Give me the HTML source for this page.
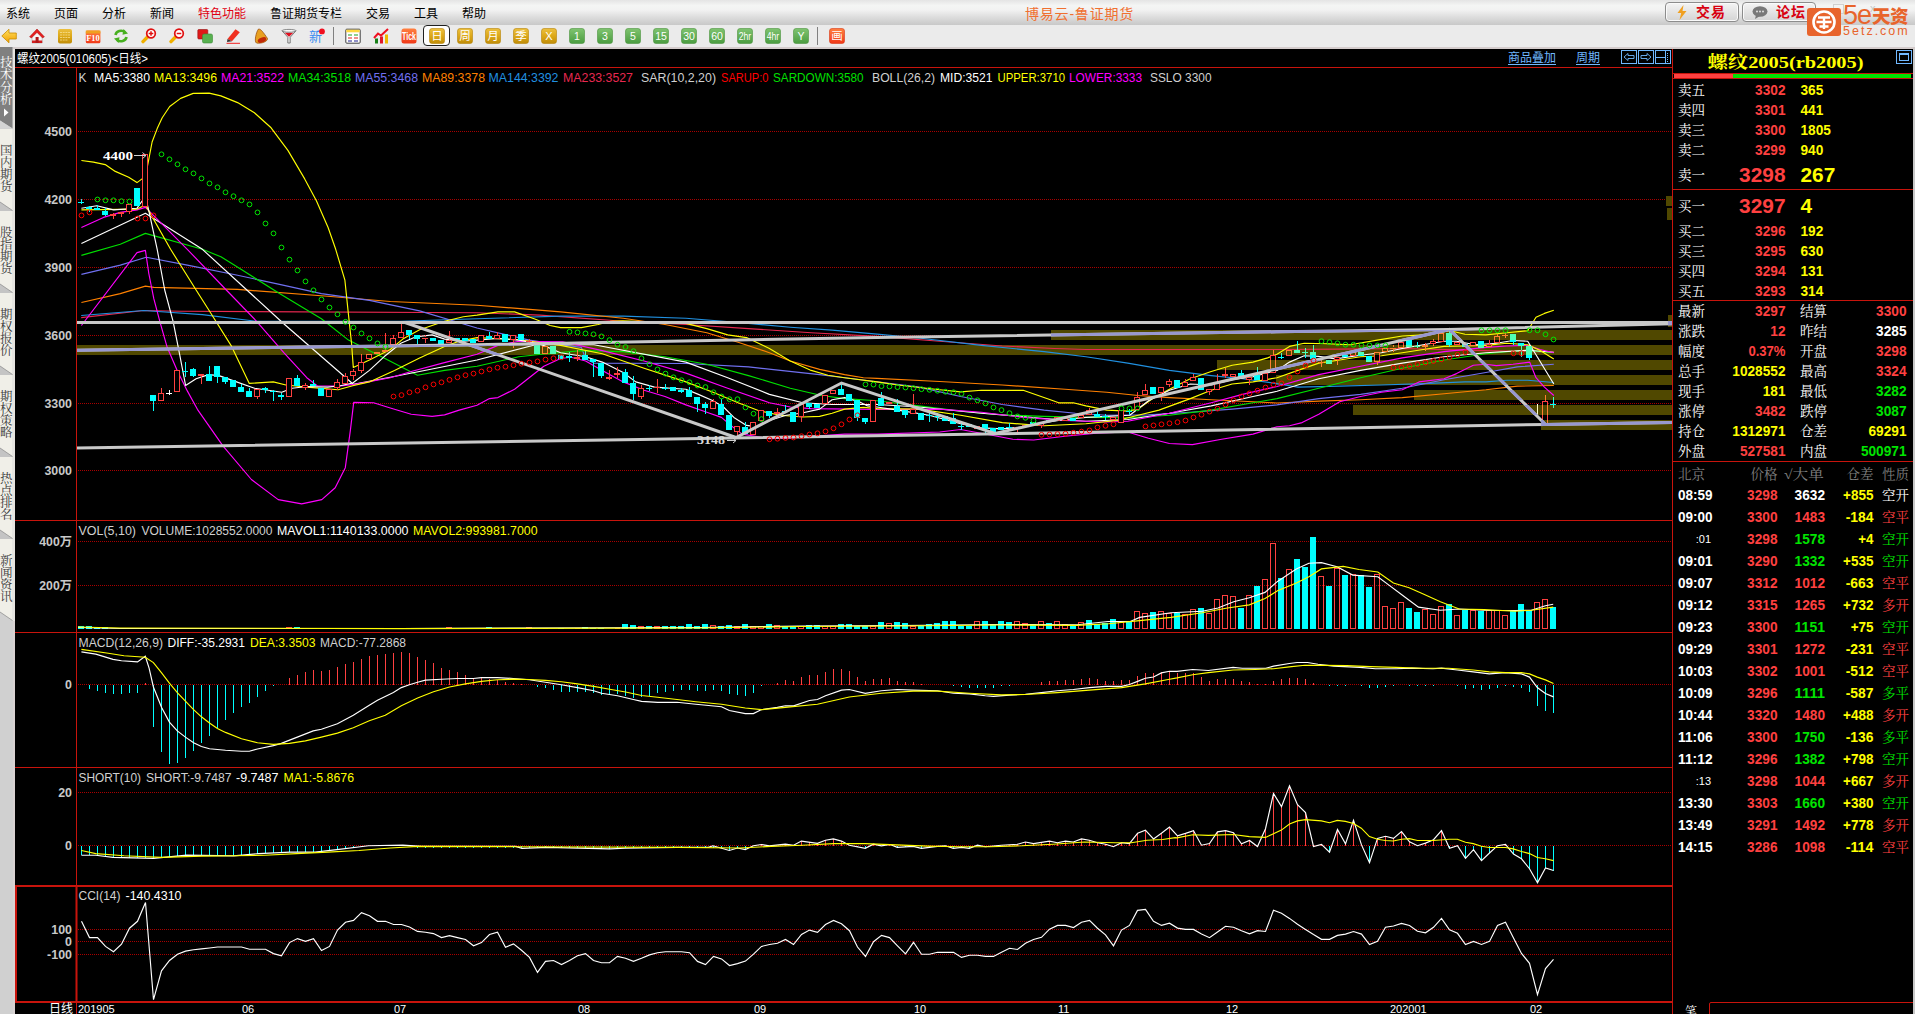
<!DOCTYPE html>
<html lang="zh-CN"><head><meta charset="utf-8"><title>博易云-鲁证期货</title>
<style>
html,body{margin:0;padding:0}
body{width:1915px;height:1014px;overflow:hidden;background:#ebebeb;position:relative;font-family:"Liberation Sans","Noto Sans CJK SC",sans-serif}
#menubar{position:absolute;left:0;top:0;width:1915px;height:25px;background:linear-gradient(#e4e4e4 0,#f4f5f4 22%,#f2f2f2 40%,#dcdcdc 70%,#c8c8c8 100%)}
#toolbar{position:absolute;left:0;top:25px;width:1915px;height:22px;background:#ebebeb}
#tbline{position:absolute;left:13px;top:47px;width:1902px;height:2px;background:#d4cccc}
.mi{position:absolute;top:6.5px;font-size:12px;line-height:15px;white-space:nowrap;letter-spacing:0}
.ttl{position:absolute;left:1025px;top:5.5px;font-size:14px;line-height:16px;color:#f07030;white-space:nowrap;letter-spacing:.8px}
.tb{position:absolute;top:2px;width:72px;height:18px;border:1px solid #8c8c8c;border-radius:4px;background:linear-gradient(#f4f4f4,#d4d4d4);box-shadow:inset 0 0 0 1px #fafafa}
.tb b{position:absolute;top:1px;font-size:14px;line-height:16px;color:#d80010;font-weight:bold;letter-spacing:1px}
.ic{position:absolute;display:block}
.sep{position:absolute;top:27px;width:1px;height:18px;background:#808080}
.wm{position:absolute;left:1807px;top:8px;width:104px;height:29px}
.w1{position:absolute;left:36px;top:-7px;font-size:27px;line-height:28px;color:#e8642c;letter-spacing:-1px}
.w2{position:absolute;left:65px;top:-1px;font-size:18.5px;line-height:20px;color:#e8642c;font-weight:900;white-space:nowrap;letter-spacing:-.5px}
.w3{position:absolute;left:36px;top:17px;font-size:12.5px;line-height:12px;color:#e8642c;letter-spacing:2px}
#main{position:absolute;left:0;top:0}
</style></head>
<body>
<svg id="main" width="1915" height="1014" viewBox="0 0 1915 1014" font-family='"Liberation Sans","Noto Sans CJK SC",sans-serif'>
<rect x="0" y="47" width="13" height="967" fill="#d0d0d0"/>
<rect x="13" y="48" width="2" height="966" fill="#d8d2d2"/>
<rect x="12.5" y="48" width="2.5" height="573" fill="#e6e4e0"/>
<path d="M0 47 H12.5 V128.5 L0 120.5 Z" fill="#808080"/>
<path d="M0 120.5 L12.5 128.5 H0 Z" fill="#d4d4d4"/>
<text x="6.3" y="67.0" fill="#fff" font-size="12.5" text-anchor="middle" font-family='"Liberation Serif","Noto Serif CJK SC",serif'>技</text><text x="6.3" y="79.3" fill="#fff" font-size="12.5" text-anchor="middle" font-family='"Liberation Serif","Noto Serif CJK SC",serif'>术</text><text x="6.3" y="91.6" fill="#fff" font-size="12.5" text-anchor="middle" font-family='"Liberation Serif","Noto Serif CJK SC",serif'>分</text><text x="6.3" y="103.9" fill="#fff" font-size="12.5" text-anchor="middle" font-family='"Liberation Serif","Noto Serif CJK SC",serif'>析</text>
<path d="M4 108.5 L8.5 112.5 L4 116.5 Z" fill="#fff"/>
<rect x="0" y="129" width="12.5" height="82" fill="#f0efe8"/>
<path d="M0 202 L12.5 210.5 V211 H0 Z" fill="#c4c4c4"/>
<path d="M0 202 L12.5 210.5" stroke="#909090" stroke-width=".8" fill="none"/>
<text x="6.3" y="154.5" fill="#383838" font-size="12.5" text-anchor="middle" font-family='"Liberation Serif","Noto Serif CJK SC",serif'>国</text><text x="6.3" y="166.8" fill="#383838" font-size="12.5" text-anchor="middle" font-family='"Liberation Serif","Noto Serif CJK SC",serif'>内</text><text x="6.3" y="179.1" fill="#383838" font-size="12.5" text-anchor="middle" font-family='"Liberation Serif","Noto Serif CJK SC",serif'>期</text><text x="6.3" y="191.4" fill="#383838" font-size="12.5" text-anchor="middle" font-family='"Liberation Serif","Noto Serif CJK SC",serif'>货</text>
<rect x="0" y="211" width="12.5" height="82" fill="#f0efe8"/>
<path d="M0 284 L12.5 292.5 V293 H0 Z" fill="#c4c4c4"/>
<path d="M0 284 L12.5 292.5" stroke="#909090" stroke-width=".8" fill="none"/>
<text x="6.3" y="236.5" fill="#383838" font-size="12.5" text-anchor="middle" font-family='"Liberation Serif","Noto Serif CJK SC",serif'>股</text><text x="6.3" y="248.8" fill="#383838" font-size="12.5" text-anchor="middle" font-family='"Liberation Serif","Noto Serif CJK SC",serif'>指</text><text x="6.3" y="261.1" fill="#383838" font-size="12.5" text-anchor="middle" font-family='"Liberation Serif","Noto Serif CJK SC",serif'>期</text><text x="6.3" y="273.4" fill="#383838" font-size="12.5" text-anchor="middle" font-family='"Liberation Serif","Noto Serif CJK SC",serif'>货</text>
<rect x="0" y="293" width="12.5" height="82" fill="#f0efe8"/>
<path d="M0 366 L12.5 374.5 V375 H0 Z" fill="#c4c4c4"/>
<path d="M0 366 L12.5 374.5" stroke="#909090" stroke-width=".8" fill="none"/>
<text x="6.3" y="318.5" fill="#383838" font-size="12.5" text-anchor="middle" font-family='"Liberation Serif","Noto Serif CJK SC",serif'>期</text><text x="6.3" y="330.8" fill="#383838" font-size="12.5" text-anchor="middle" font-family='"Liberation Serif","Noto Serif CJK SC",serif'>权</text><text x="6.3" y="343.1" fill="#383838" font-size="12.5" text-anchor="middle" font-family='"Liberation Serif","Noto Serif CJK SC",serif'>报</text><text x="6.3" y="355.4" fill="#383838" font-size="12.5" text-anchor="middle" font-family='"Liberation Serif","Noto Serif CJK SC",serif'>价</text>
<rect x="0" y="375" width="12.5" height="82" fill="#f0efe8"/>
<path d="M0 448 L12.5 456.5 V457 H0 Z" fill="#c4c4c4"/>
<path d="M0 448 L12.5 456.5" stroke="#909090" stroke-width=".8" fill="none"/>
<text x="6.3" y="400.5" fill="#383838" font-size="12.5" text-anchor="middle" font-family='"Liberation Serif","Noto Serif CJK SC",serif'>期</text><text x="6.3" y="412.8" fill="#383838" font-size="12.5" text-anchor="middle" font-family='"Liberation Serif","Noto Serif CJK SC",serif'>权</text><text x="6.3" y="425.1" fill="#383838" font-size="12.5" text-anchor="middle" font-family='"Liberation Serif","Noto Serif CJK SC",serif'>策</text><text x="6.3" y="437.4" fill="#383838" font-size="12.5" text-anchor="middle" font-family='"Liberation Serif","Noto Serif CJK SC",serif'>略</text>
<rect x="0" y="457" width="12.5" height="82" fill="#f0efe8"/>
<path d="M0 530 L12.5 538.5 V539 H0 Z" fill="#c4c4c4"/>
<path d="M0 530 L12.5 538.5" stroke="#909090" stroke-width=".8" fill="none"/>
<text x="6.3" y="482.5" fill="#383838" font-size="12.5" text-anchor="middle" font-family='"Liberation Serif","Noto Serif CJK SC",serif'>热</text><text x="6.3" y="494.8" fill="#383838" font-size="12.5" text-anchor="middle" font-family='"Liberation Serif","Noto Serif CJK SC",serif'>点</text><text x="6.3" y="507.1" fill="#383838" font-size="12.5" text-anchor="middle" font-family='"Liberation Serif","Noto Serif CJK SC",serif'>排</text><text x="6.3" y="519.4" fill="#383838" font-size="12.5" text-anchor="middle" font-family='"Liberation Serif","Noto Serif CJK SC",serif'>名</text>
<rect x="0" y="539" width="12.5" height="82" fill="#f0efe8"/>
<path d="M0 612 L12.5 620.5 V621.5 H0 Z" fill="#d0d0d0"/>
<path d="M0 612 L12.5 620.5" stroke="#909090" stroke-width=".8" fill="none"/>
<text x="6.3" y="564.5" fill="#383838" font-size="12.5" text-anchor="middle" font-family='"Liberation Serif","Noto Serif CJK SC",serif'>新</text><text x="6.3" y="576.8" fill="#383838" font-size="12.5" text-anchor="middle" font-family='"Liberation Serif","Noto Serif CJK SC",serif'>闻</text><text x="6.3" y="589.1" fill="#383838" font-size="12.5" text-anchor="middle" font-family='"Liberation Serif","Noto Serif CJK SC",serif'>资</text><text x="6.3" y="601.4" fill="#383838" font-size="12.5" text-anchor="middle" font-family='"Liberation Serif","Noto Serif CJK SC",serif'>讯</text>
<rect x="15" y="49" width="1898" height="965" fill="#000"/>
<text x="17" y="62.5" fill="#fff" font-size="12" textLength="131" lengthAdjust="spacingAndGlyphs">螺纹2005(010605)&lt;日线&gt;</text>
<line x1="15" y1="67.5" x2="1672.5" y2="67.5" stroke="#c8140c" stroke-width="1"/>
<line x1="76.5" y1="68" x2="76.5" y2="1014" stroke="#c8140c" stroke-width="1"/>
<line x1="1672.5" y1="49" x2="1672.5" y2="1014" stroke="#c8140c" stroke-width="1"/>
<line x1="15" y1="520.5" x2="1672.5" y2="520.5" stroke="#c8140c" stroke-width="1"/>
<line x1="15" y1="632.5" x2="1672.5" y2="632.5" stroke="#c8140c" stroke-width="1"/>
<line x1="15" y1="767.5" x2="1672.5" y2="767.5" stroke="#c8140c" stroke-width="1"/>
<rect x="16" y="886" width="60.5" height="116" fill="none" stroke="#c8140c" stroke-width="2"/>
<line x1="76" y1="886" x2="1672.5" y2="886" stroke="#c8140c" stroke-width="2"/>
<line x1="76" y1="1002" x2="1672.5" y2="1002" stroke="#c8140c" stroke-width="2"/>
<line x1="78" y1="131.5" x2="1672" y2="131.5" stroke="#a80000" stroke-width="1" stroke-dasharray="1,1"/>
<text x="72" y="136.0" fill="#c8c8c8" font-size="12" text-anchor="end" font-weight="bold" textLength="27.6" lengthAdjust="spacingAndGlyphs">4500</text>
<line x1="78" y1="199.5" x2="1672" y2="199.5" stroke="#a80000" stroke-width="1" stroke-dasharray="1,1"/>
<text x="72" y="204.0" fill="#c8c8c8" font-size="12" text-anchor="end" font-weight="bold" textLength="27.6" lengthAdjust="spacingAndGlyphs">4200</text>
<line x1="78" y1="267.5" x2="1672" y2="267.5" stroke="#a80000" stroke-width="1" stroke-dasharray="1,1"/>
<text x="72" y="272.0" fill="#c8c8c8" font-size="12" text-anchor="end" font-weight="bold" textLength="27.6" lengthAdjust="spacingAndGlyphs">3900</text>
<line x1="78" y1="335.5" x2="1672" y2="335.5" stroke="#a80000" stroke-width="1" stroke-dasharray="1,1"/>
<text x="72" y="340.0" fill="#c8c8c8" font-size="12" text-anchor="end" font-weight="bold" textLength="27.6" lengthAdjust="spacingAndGlyphs">3600</text>
<line x1="78" y1="403.5" x2="1672" y2="403.5" stroke="#a80000" stroke-width="1" stroke-dasharray="1,1"/>
<text x="72" y="408.0" fill="#c8c8c8" font-size="12" text-anchor="end" font-weight="bold" textLength="27.6" lengthAdjust="spacingAndGlyphs">3300</text>
<line x1="78" y1="470.5" x2="1672" y2="470.5" stroke="#a80000" stroke-width="1" stroke-dasharray="1,1"/>
<text x="72" y="475.0" fill="#c8c8c8" font-size="12" text-anchor="end" font-weight="bold" textLength="27.6" lengthAdjust="spacingAndGlyphs">3000</text>
<line x1="78" y1="541.5" x2="1672" y2="541.5" stroke="#a80000" stroke-width="1" stroke-dasharray="1,1"/>
<text x="72" y="546.0" fill="#c8c8c8" font-size="12" text-anchor="end" font-weight="bold" textLength="32.7" lengthAdjust="spacingAndGlyphs">400万</text>
<line x1="78" y1="585.5" x2="1672" y2="585.5" stroke="#a80000" stroke-width="1" stroke-dasharray="1,1"/>
<text x="72" y="590.0" fill="#c8c8c8" font-size="12" text-anchor="end" font-weight="bold" textLength="32.7" lengthAdjust="spacingAndGlyphs">200万</text>
<line x1="78" y1="684.5" x2="1672" y2="684.5" stroke="#a80000" stroke-width="1" stroke-dasharray="1,1"/>
<text x="72" y="689" fill="#c8c8c8" font-size="12" text-anchor="end" font-weight="bold" textLength="6.9" lengthAdjust="spacingAndGlyphs">0</text>
<line x1="78" y1="792.5" x2="1672" y2="792.5" stroke="#a80000" stroke-width="1" stroke-dasharray="1,1"/>
<text x="72" y="797" fill="#c8c8c8" font-size="12" text-anchor="end" font-weight="bold" textLength="13.8" lengthAdjust="spacingAndGlyphs">20</text>
<line x1="78" y1="845.5" x2="1672" y2="845.5" stroke="#a80000" stroke-width="1" stroke-dasharray="1,1"/>
<text x="72" y="850" fill="#c8c8c8" font-size="12" text-anchor="end" font-weight="bold" textLength="6.9" lengthAdjust="spacingAndGlyphs">0</text>
<line x1="78" y1="929.5" x2="1672" y2="929.5" stroke="#a80000" stroke-width="1" stroke-dasharray="1,1"/>
<text x="72" y="934.0" fill="#c8c8c8" font-size="12" text-anchor="end" font-weight="bold" textLength="20.7" lengthAdjust="spacingAndGlyphs">100</text>
<line x1="78" y1="941.5" x2="1672" y2="941.5" stroke="#a80000" stroke-width="1" stroke-dasharray="1,1"/>
<text x="72" y="946.0" fill="#c8c8c8" font-size="12" text-anchor="end" font-weight="bold" textLength="6.9" lengthAdjust="spacingAndGlyphs">0</text>
<line x1="78" y1="954.5" x2="1672" y2="954.5" stroke="#a80000" stroke-width="1" stroke-dasharray="1,1"/>
<text x="72" y="959.0" fill="#c8c8c8" font-size="12" text-anchor="end" font-weight="bold" textLength="24.9" lengthAdjust="spacingAndGlyphs">-100</text>
<text x="73" y="1013" fill="#fff" font-size="12" text-anchor="end">日线</text>
<text x="78" y="1013" fill="#fff" font-size="11">201905</text>
<text x="242" y="1013" fill="#fff" font-size="11">06</text>
<text x="394" y="1013" fill="#fff" font-size="11">07</text>
<text x="578" y="1013" fill="#fff" font-size="11">08</text>
<text x="754" y="1013" fill="#fff" font-size="11">09</text>
<text x="914" y="1013" fill="#fff" font-size="11">10</text>
<text x="1058" y="1013" fill="#fff" font-size="11">11</text>
<text x="1226" y="1013" fill="#fff" font-size="11">12</text>
<text x="1390" y="1013" fill="#fff" font-size="11">202001</text>
<text x="1530" y="1013" fill="#fff" font-size="11">02</text>
<svg x="77" y="68" width="1595" height="946" viewBox="77 68 1595 946" overflow="hidden">
<defs><clipPath id="bandclip"><rect x="1051" y="330" width="621" height="10"/><rect x="77" y="345" width="1595" height="10"/><rect x="1217" y="360" width="455" height="10"/><rect x="1276" y="375" width="396" height="10"/><rect x="1414" y="390" width="258" height="10"/><rect x="1353" y="405" width="319" height="10"/><rect x="1541" y="420" width="131" height="10"/><rect x="1668" y="315" width="4" height="12"/></clipPath></defs>
<rect x="1051" y="330" width="621" height="10" fill="#504800"/><rect x="77" y="345" width="1595" height="10" fill="#504800"/><rect x="1217" y="360" width="455" height="10" fill="#504800"/><rect x="1276" y="375" width="396" height="10" fill="#504800"/><rect x="1414" y="390" width="258" height="10" fill="#504800"/><rect x="1353" y="405" width="319" height="10" fill="#504800"/><rect x="1541" y="420" width="131" height="10" fill="#504800"/><rect x="1668" y="315" width="4" height="12" fill="#504800"/><rect x="1666" y="196" width="6" height="10" fill="#504800"/><rect x="1667" y="208" width="5" height="12" fill="#504800"/>
<polyline points="81.2,317.6 143.8,310.5 181.4,311.3 477.0,312.8 539.7,315.1 623.2,321.3 685.9,324.5 748.5,328.6 811.2,332.8 877.0,336.4 939.7,341.2 1002.3,346.0 1054.5,348.5 1085.9,349.5 1277.0,349.5 1339.7,349.1 1402.3,348.5 1485.9,350.6 1553.8,352.2" stroke="#e82850" stroke-width="1.15" fill="none" stroke-linejoin="round"/>
<polyline points="81.2,315.5 143.8,310.5 202.3,314.6 256.6,321.3 400.8,321.3 477.0,318.8 560.6,316.1 623.2,316.1 685.9,318.2 748.5,323.4 790.3,327.2 832.1,330.1 877.0,334.1 918.8,338.0 981.4,345.4 1044.1,351.6 1085.9,356.8 1127.7,363.1 1169.4,370.4 1211.2,375.6 1242.5,378.8 1277.0,383.6 1297.9,387.1 1339.7,386.1 1381.4,385.0 1423.2,383.6 1465.0,381.9 1485.9,381.9 1506.8,380.2 1527.7,380.2 1553.8,382.5" stroke="#2090e0" stroke-width="1.15" fill="none" stroke-linejoin="round"/>
<polyline points="81.4,302.5 120.3,293.6 145.4,286.1 153.8,287.4 237.6,289.4 327.7,296.3 390.3,301.5 477.0,305.2 560.6,311.9 623.2,318.2 665.0,324.5 706.8,332.8 738.1,342.2 769.4,352.7 790.3,361.0 819.6,369.4 844.6,374.6 863.4,377.7 877.0,378.4 939.7,381.5 1002.3,385.0 1065.0,389.2 1106.8,392.3 1138.1,395.5 1169.4,397.6 1211.2,399.7 1253.0,401.7 1277.0,403.0 1318.8,401.1 1360.6,399.7 1402.3,397.6 1444.1,393.8 1485.9,389.8 1517.2,386.1 1553.8,385.5" stroke="#ff8000" stroke-width="1.15" fill="none" stroke-linejoin="round"/>
<polyline points="81.4,274.4 120.3,265.1 146.3,257.3 187.3,265.1 237.6,275.2 279.5,284.4 321.4,293.6 369.4,300.4 419.6,310.9 477.0,328.0 529.2,340.1 560.6,344.7 581.4,347.4 585.6,358.9 594.0,363.1 685.9,363.5 748.5,366.9 819.6,374.6 853.0,378.8 877.0,381.9 918.8,387.1 960.6,396.5 1002.3,404.5 1044.1,410.1 1075.4,413.2 1106.8,415.3 1148.5,414.9 1190.3,412.2 1232.1,409.1 1277.0,404.9 1318.8,398.6 1360.6,394.4 1402.3,388.2 1444.1,379.8 1485.9,372.5 1517.2,366.9 1553.8,364.2" stroke="#7070f0" stroke-width="1.15" fill="none" stroke-linejoin="round"/>
<polyline points="81.4,255.4 120.3,244.2 145.4,233.4 202.4,249.3 220.9,256.8 241.0,269.3 279.5,293.6 321.4,318.8 348.5,340.1 384.0,357.9 417.5,375.2 444.6,370.4 477.0,366.2 518.8,356.8 545.9,353.7 581.4,350.6 623.2,351.6 665.0,356.8 706.8,364.2 748.5,375.6 790.3,388.2 821.6,395.5 844.6,398.6 877.0,400.7 918.8,405.9 960.6,411.1 1002.3,414.9 1044.1,416.4 1085.9,417.4 1127.7,417.8 1169.4,415.3 1211.2,410.1 1253.0,402.8 1277.0,398.6 1318.8,388.2 1360.6,377.7 1402.3,368.3 1444.1,360.0 1485.9,353.7 1506.8,351.6 1527.7,350.6 1553.8,352.7" stroke="#00e000" stroke-width="1.15" fill="none" stroke-linejoin="round"/>
<polyline points="81.4,325.5 137.0,252.6 145.4,250.4 148.8,273.5 153.8,298.7 160.5,323.8 167.2,347.3 177.3,370.7 187.3,390.9 197.4,409.3 222.9,445.9 251.4,479.5 278.2,499.6 301.7,503.9 321.8,499.6 335.2,487.8 345.3,467.7 350.3,430.9 353.7,402.4 373.6,402.8 390.3,408.0 411.2,414.3 432.1,416.4 444.6,414.9 459.2,410.1 477.0,405.3 489.5,398.6 497.9,397.6 514.6,389.2 529.2,377.7 543.8,366.2 560.6,358.5 571.0,357.3 585.6,361.0 602.3,370.4 623.2,381.9 644.1,390.3 665.0,396.5 685.9,404.9 706.8,412.2 721.4,417.4 733.9,427.9 742.3,434.1 769.4,438.7 790.3,437.9 844.6,434.1 877.0,434.1 939.7,432.0 960.6,429.5 991.9,435.2 1012.8,439.3 1033.7,440.0 1065.0,436.2 1096.3,433.1 1127.7,432.0 1148.5,438.3 1169.4,443.5 1192.4,444.6 1221.6,439.3 1253.0,434.1 1277.0,426.8 1289.5,425.8 1302.1,422.6 1318.8,414.3 1339.7,401.7 1360.6,396.5 1381.4,392.3 1402.3,389.8 1419.0,381.9 1444.1,378.8 1456.6,373.6 1473.3,365.2 1485.9,364.2 1496.3,365.6 1513.0,364.2 1529.7,362.1 1536.0,377.7 1544.4,387.1 1553.8,395.5" stroke="#ff00ff" stroke-width="1.15" fill="none" stroke-linejoin="round"/>
<polyline points="81.4,160.5 93.5,162.1 105.2,164.6 115.3,171.4 128.7,177.2 137.0,182.6 145.4,176.4 147.9,163.8 152.1,142.0 157.2,128.6 162.2,117.7 169.7,106.5 180.6,98.4 193.2,93.4 209.1,93.1 220.9,95.9 237.6,102.6 254.4,112.7 271.1,127.8 287.9,150.4 304.7,178.9 316.4,200.7 328.1,227.5 335.7,249.3 344.9,280.2 348.2,312.1 351.6,343.9 353.3,367.4 369.4,360.0 390.3,349.5 402.8,339.1 419.6,329.7 444.6,321.3 463.4,316.7 477.0,315.1 497.9,311.9 514.6,311.9 535.5,319.2 550.1,325.5 560.6,327.6 581.4,327.6 598.1,324.5 610.7,321.3 623.2,320.9 685.9,323.4 706.8,328.6 727.7,334.9 746.5,337.6 769.4,348.5 790.3,361.0 811.2,370.4 827.9,375.2 844.6,377.7 877.0,381.9 897.9,385.0 939.7,389.8 960.6,391.9 981.4,390.3 1023.2,390.3 1050.4,399.7 1058.7,402.8 1073.3,402.8 1085.9,405.9 1106.8,410.1 1127.7,411.1 1138.1,409.1 1152.7,398.6 1169.4,389.2 1190.3,378.8 1211.2,371.5 1232.1,365.2 1253.0,362.1 1267.6,357.9 1277.0,354.3 1289.5,346.4 1304.2,343.3 1329.2,343.9 1350.1,344.7 1377.3,340.1 1402.3,336.0 1423.2,334.9 1444.1,331.8 1450.4,330.7 1465.0,334.3 1485.9,334.9 1506.8,332.8 1527.7,330.7 1536.0,317.2 1544.4,313.4 1553.8,310.3" stroke="#ffff00" stroke-width="1.15" fill="none" stroke-linejoin="round"/>
<polyline points="81.4,243.4 145.4,213.3 202.4,249.3 282.9,323.0 353.3,384.2 390.3,377.3 432.1,369.0 477.0,360.0 535.5,344.7 594.0,344.7 685.9,362.1 727.7,377.7 769.4,394.4 802.8,402.8 832.1,404.5 877.0,404.5 918.8,407.0 981.4,413.2 1044.1,418.5 1085.9,421.2 1127.7,419.5 1169.4,413.2 1211.2,405.9 1253.0,396.5 1277.0,391.3 1318.8,378.8 1360.6,370.4 1402.3,363.1 1444.1,356.8 1485.9,352.7 1527.7,350.2 1553.8,352.2" stroke="#ffffff" stroke-width="1.15" fill="none" stroke-linejoin="round"/>
<polyline points="81.4,227.5 103.5,217.4 120.3,212.4 137.0,209.9 145.4,207.4 150.5,212.4 187.3,249.3 226.3,290.0 256.6,321.3 283.8,352.7 306.8,377.7 317.2,385.7 338.1,386.1 354.8,384.4 390.3,377.7 411.2,371.5 442.5,363.1 477.0,354.3 497.9,345.4 518.8,341.2 562.6,341.8 602.3,350.6 644.1,361.0 685.9,373.1 727.7,388.2 769.4,402.8 790.3,407.0 811.2,408.6 853.0,409.1 877.0,409.5 939.7,409.1 981.4,412.2 1023.2,417.4 1065.0,420.5 1106.8,422.0 1127.7,421.2 1169.4,413.2 1211.2,402.8 1242.5,394.4 1277.0,386.5 1318.8,374.6 1360.6,366.2 1402.3,357.9 1444.1,351.6 1485.9,347.4 1506.8,346.0 1527.7,345.4 1540.2,349.5 1553.8,352.7" stroke="#ff00ff" stroke-width="1.15" fill="none" stroke-linejoin="round"/>
<polyline points="81.4,209.9 137.0,209.1 145.4,204.9 170.6,249.3 196.1,290.0 210.7,313.0 231.6,346.4 249.3,383.4 273.3,381.9 285.9,385.0 306.8,387.1 338.1,389.8 352.7,385.7 369.4,381.9 394.5,370.4 419.6,357.9 444.6,346.4 459.2,341.2 477.0,337.6 518.8,339.7 560.6,345.4 602.3,353.7 644.1,368.3 685.9,381.9 713.0,392.3 738.1,402.8 759.0,410.7 779.9,415.3 802.8,417.0 819.6,416.4 832.1,413.2 844.6,409.1 863.4,407.4 877.0,408.6 918.8,409.1 960.6,415.3 1002.3,422.6 1044.1,425.8 1085.9,423.7 1117.2,420.5 1138.1,415.3 1159.0,410.1 1190.3,398.6 1211.2,390.3 1232.1,384.0 1253.0,381.9 1277.0,377.7 1297.9,370.4 1318.8,363.1 1339.7,360.0 1360.6,356.8 1381.4,355.8 1402.3,352.7 1423.2,349.5 1444.1,346.4 1465.0,346.0 1485.9,345.4 1506.8,343.3 1527.7,344.7 1540.2,350.6 1553.8,358.9" stroke="#ffff00" stroke-width="1.15" fill="none" stroke-linejoin="round"/>
<polyline points="81.4,208.2 96.8,205.7 113.6,209.9 137.0,208.2 145.4,196.5 148.8,210.7 157.2,249.3 164.7,290.0 173.1,321.3 179.3,352.7 185.6,385.5 196.1,378.8 208.6,374.6 219.0,375.6 233.7,380.9 254.5,388.2 281.7,392.3 292.1,388.2 306.8,386.5 327.7,387.1 340.2,385.7 352.7,383.0 369.4,370.4 384.0,356.8 400.8,343.3 415.4,337.0 432.1,334.9 444.6,339.1 463.4,341.2 477.0,340.1 497.9,338.5 518.8,340.1 539.7,343.9 560.6,352.7 585.6,356.8 602.3,362.1 623.2,372.5 635.7,381.9 654.5,387.1 685.9,389.2 698.4,394.4 713.0,400.7 723.5,407.0 733.9,417.4 746.5,425.4 756.9,426.8 769.4,420.5 786.1,415.3 800.8,413.2 819.6,409.1 832.1,399.7 844.6,397.6 859.2,401.7 867.6,405.9 877.0,407.0 897.9,410.1 929.2,415.3 960.6,423.7 981.4,427.9 1002.3,428.9 1023.2,426.8 1044.1,422.6 1065.0,419.5 1085.9,417.4 1106.8,416.4 1129.7,415.3 1148.5,400.7 1169.4,390.3 1190.3,384.0 1211.2,385.0 1232.1,379.8 1253.0,376.7 1277.0,370.4 1289.5,362.1 1304.2,355.8 1318.8,356.4 1335.5,358.9 1360.6,355.2 1381.4,352.7 1402.3,348.5 1423.2,344.7 1444.1,341.2 1456.6,341.2 1475.4,344.7 1496.3,343.3 1513.0,340.5 1527.7,341.2 1536.0,354.8 1553.8,384.0" stroke="#ffffff" stroke-width="1.15" fill="none" stroke-linejoin="round"/>
<g><path d="M81.5 199V204M78.0 202.5H84.0M89.5 206V212M97.5 205V210M105.5 208V216M137.5 188V206M153.5 395V411M185.5 362V377M182.0 371.5H188.0M193.5 368V377M209.5 366V381M217.5 366V383M225.5 377V384M233.5 380V387M241.5 384V392M249.5 388V397M265.5 387V393M273.5 390V401M270.0 391.5H276.0M281.5 393V400M297.5 375V386M313.5 380V386M321.5 388V396M409.5 330V339M417.5 335V344M433.5 338V341M441.5 340V344M457.5 338V341M465.5 338V341M473.5 339V343M489.5 332V339M505.5 334V342M521.5 334V340M537.5 345V354M553.5 346V354M561.5 355V359M569.5 352V362M585.5 351V360M593.5 359V377M601.5 363V378M625.5 369V383M633.5 376V400M649.5 385V391M646.0 388.5H652.0M665.5 384V390M662.0 388.5H668.0M673.5 387V391M681.5 388V393M689.5 387V397M697.5 397V412M705.5 402V414M721.5 399V415M729.5 415V430M745.5 422V434M769.5 411V418M785.5 405V413M782.0 411.5H788.0M793.5 412V422M809.5 403V409M817.5 404V408M841.5 384V395M849.5 394V401M857.5 400V421M865.5 418V424M881.5 392V406M897.5 399V412M905.5 410V418M921.5 413V420M929.5 413V422M926.0 415.5H932.0M937.5 413V421M934.0 416.5H940.0M945.5 416V421M953.5 413V424M961.5 422V430M958.0 426.5H964.0M969.5 424V427M985.5 424V434M993.5 428V432M1001.5 427V430M1009.5 423V430M1006.0 427.5H1012.0M1033.5 422V424M1049.5 420V422M1073.5 418V421M1097.5 410V417M1105.5 414V420M1102.0 416.5H1108.0M1129.5 409V415M1126.0 411.5H1132.0M1153.5 387V394M1177.5 380V388M1201.5 378V390M1241.5 370V378M1257.5 367V380M1281.5 353V359M1278.0 357.5H1284.0M1297.5 341V353M1305.5 348V358M1302.0 352.5H1308.0M1313.5 345V359M1329.5 360V364M1345.5 355V357M1361.5 352V356M1369.5 356V362M1409.5 340V347M1417.5 342V348M1414.0 346.5H1420.0M1449.5 329V347M1465.5 344V347M1481.5 341V348M1513.5 334V345M1521.5 343V357M1529.5 346V360M1553.5 397V408M1550.0 404.5H1556.0" stroke="#00ffff" stroke-width="1" fill="none" shape-rendering="crispEdges"/>
<path d="M86.0 207h6V209h-6ZM94.0 208h6V210h-6ZM102.0 211h6V215h-6ZM134.0 188h6V206h-6ZM150.0 395h6V401h-6ZM190.0 369h6V376h-6ZM206.0 374h6V381h-6ZM214.0 366h6V377h-6ZM222.0 377h6V382h-6ZM230.0 380h6V387h-6ZM238.0 387h6V392h-6ZM246.0 391h6V397h-6ZM262.0 388h6V390h-6ZM278.0 395h6V397h-6ZM294.0 378h6V386h-6ZM310.0 384h6V386h-6ZM318.0 388h6V396h-6ZM406.0 330h6V335h-6ZM414.0 335h6V339h-6ZM430.0 338h6V341h-6ZM438.0 340h6V344h-6ZM454.0 338h6V341h-6ZM462.0 338h6V341h-6ZM470.0 339h6V343h-6ZM486.0 336h6V339h-6ZM502.0 334h6V342h-6ZM518.0 334h6V340h-6ZM534.0 345h6V354h-6ZM550.0 346h6V354h-6ZM558.0 355h6V359h-6ZM566.0 356h6V358h-6ZM582.0 355h6V360h-6ZM590.0 359h6V362h-6ZM598.0 363h6V376h-6ZM622.0 372h6V383h-6ZM630.0 383h6V394h-6ZM670.0 387h6V391h-6ZM678.0 390h6V392h-6ZM686.0 390h6V397h-6ZM694.0 397h6V404h-6ZM702.0 404h6V408h-6ZM718.0 404h6V415h-6ZM726.0 415h6V430h-6ZM742.0 427h6V434h-6ZM766.0 411h6V416h-6ZM790.0 412h6V422h-6ZM806.0 403h6V407h-6ZM814.0 404h6V408h-6ZM838.0 389h6V395h-6ZM846.0 394h6V401h-6ZM854.0 400h6V418h-6ZM862.0 418h6V422h-6ZM878.0 398h6V406h-6ZM894.0 406h6V412h-6ZM902.0 410h6V415h-6ZM918.0 413h6V420h-6ZM942.0 416h6V421h-6ZM950.0 418h6V424h-6ZM966.0 424h6V427h-6ZM982.0 424h6V429h-6ZM990.0 428h6V432h-6ZM998.0 427h6V430h-6ZM1030.0 422h6V424h-6ZM1046.0 420h6V422h-6ZM1070.0 418h6V421h-6ZM1094.0 414h6V417h-6ZM1150.0 387h6V394h-6ZM1174.0 380h6V388h-6ZM1198.0 378h6V390h-6ZM1238.0 373h6V378h-6ZM1254.0 375h6V380h-6ZM1294.0 350h6V353h-6ZM1310.0 352h6V359h-6ZM1326.0 360h6V364h-6ZM1342.0 355h6V357h-6ZM1358.0 352h6V356h-6ZM1366.0 356h6V362h-6ZM1406.0 340h6V347h-6ZM1446.0 333h6V345h-6ZM1462.0 344h6V347h-6ZM1478.0 341h6V348h-6ZM1510.0 334h6V342h-6ZM1518.0 343h6V346h-6ZM1526.0 346h6V358h-6Z" fill="#00ffff" shape-rendering="crispEdges"/>
<path d="M113.5 213V214M113.5 216V219M121.5 212V212M121.5 214V217M129.5 212V214M161.5 388V393M201.5 376V384M257.5 397V399M305.5 383V385M305.5 388V390M337.5 379V382M337.5 388V390M345.5 373V376M353.5 369V371M353.5 376V380M361.5 354V362M361.5 371V373M385.5 333V350M393.5 335V338M401.5 323V332M425.5 335V337M425.5 338V343M422.0 338.5H428.0M449.5 331V340M497.5 332V335M513.5 340V348M529.5 339V341M529.5 342V343M526.0 341.5H532.0M577.5 350V357M577.5 359V361M609.5 370V377M609.5 379V380M617.5 367V373M617.5 375V378M641.5 385V388M641.5 397V399M657.5 379V387M657.5 387V393M654.0 387.5H660.0M713.5 399V401M737.5 432V437M777.5 408V412M777.5 414V415M801.5 417V422M913.5 394V409M1017.5 429V432M1041.5 426V428M1089.5 408V410M1137.5 392V397M1145.5 384V390M1161.5 393V401M1169.5 379V381M1169.5 385V387M1185.5 379V382M1193.5 374V377M1209.5 392V395M1217.5 374V382M1225.5 368V374M1225.5 376V378M1249.5 380V385M1273.5 350V355M1321.5 358V362M1321.5 362V367M1318.0 362.5H1324.0M1337.5 360V365M1377.5 362V365M1393.5 345V347M1393.5 348V352M1390.0 348.5H1396.0M1425.5 343V345M1425.5 347V351M1433.5 339V341M1433.5 344V346M1489.5 340V344M1497.5 334V336M1505.5 332V335M1505.5 335V338M1502.0 335.5H1508.0M1545.5 395V401" stroke="#ff4040" stroke-width="1" fill="none" shape-rendering="crispEdges"/>
<path d="M110.5 214.5h5V215.5h-5ZM118.5 212.5h5V213.5h-5ZM126.5 204.5h5V211.5h-5ZM142.5 154.5h5V206.5h-5ZM158.5 393.5h5V400.5h-5ZM174.5 370.5h5V391.5h-5ZM198.5 374.5h5V375.5h-5ZM254.5 389.5h5V396.5h-5ZM286.5 378.5h5V396.5h-5ZM302.5 385.5h5V387.5h-5ZM326.5 389.5h5V396.5h-5ZM334.5 382.5h5V387.5h-5ZM342.5 376.5h5V383.5h-5ZM350.5 371.5h5V375.5h-5ZM358.5 362.5h5V370.5h-5ZM366.5 354.5h5V358.5h-5ZM374.5 352.5h5V353.5h-5ZM382.5 350.5h5V351.5h-5ZM390.5 338.5h5V344.5h-5ZM398.5 332.5h5V337.5h-5ZM446.5 340.5h5V342.5h-5ZM478.5 335.5h5V341.5h-5ZM494.5 335.5h5V338.5h-5ZM510.5 335.5h5V339.5h-5ZM542.5 346.5h5V353.5h-5ZM574.5 357.5h5V358.5h-5ZM606.5 377.5h5V378.5h-5ZM614.5 373.5h5V374.5h-5ZM638.5 388.5h5V396.5h-5ZM710.5 401.5h5V408.5h-5ZM734.5 426.5h5V431.5h-5ZM750.5 422.5h5V434.5h-5ZM758.5 410.5h5V420.5h-5ZM774.5 412.5h5V413.5h-5ZM798.5 404.5h5V416.5h-5ZM822.5 395.5h5V403.5h-5ZM830.5 390.5h5V393.5h-5ZM870.5 400.5h5V421.5h-5ZM886.5 402.5h5V403.5h-5ZM910.5 409.5h5V413.5h-5ZM974.5 426.5h5V428.5h-5ZM1014.5 427.5h5V428.5h-5ZM1022.5 425.5h5V426.5h-5ZM1038.5 423.5h5V425.5h-5ZM1054.5 417.5h5V420.5h-5ZM1062.5 418.5h5V420.5h-5ZM1078.5 415.5h5V417.5h-5ZM1086.5 410.5h5V414.5h-5ZM1110.5 417.5h5V419.5h-5ZM1118.5 410.5h5V422.5h-5ZM1134.5 397.5h5V409.5h-5ZM1142.5 390.5h5V394.5h-5ZM1158.5 387.5h5V392.5h-5ZM1166.5 381.5h5V384.5h-5ZM1182.5 382.5h5V386.5h-5ZM1190.5 377.5h5V380.5h-5ZM1206.5 389.5h5V391.5h-5ZM1214.5 382.5h5V389.5h-5ZM1222.5 374.5h5V375.5h-5ZM1230.5 374.5h5V376.5h-5ZM1246.5 377.5h5V379.5h-5ZM1262.5 373.5h5V380.5h-5ZM1270.5 355.5h5V372.5h-5ZM1286.5 350.5h5V355.5h-5ZM1334.5 357.5h5V359.5h-5ZM1350.5 352.5h5V355.5h-5ZM1374.5 352.5h5V361.5h-5ZM1382.5 348.5h5V351.5h-5ZM1398.5 342.5h5V347.5h-5ZM1422.5 345.5h5V346.5h-5ZM1430.5 341.5h5V343.5h-5ZM1438.5 333.5h5V341.5h-5ZM1454.5 342.5h5V344.5h-5ZM1470.5 342.5h5V345.5h-5ZM1486.5 344.5h5V346.5h-5ZM1494.5 336.5h5V342.5h-5ZM1542.5 401.5h5V423.5h-5Z" stroke="#ff4040" stroke-width="1" fill="#000" shape-rendering="crispEdges"/>
<path d="M169.5 390V395M166.0 393.5H172.0M1537.5 404V418" stroke="#fff" stroke-width="1" fill="none" shape-rendering="crispEdges"/></g>
<g clip-path="url(#bandclip)"><path d="M81.5 199V204M78.0 202.5H84.0M89.5 206V212M97.5 205V210M105.5 208V216M137.5 188V206M153.5 395V411M185.5 362V377M182.0 371.5H188.0M193.5 368V377M209.5 366V381M217.5 366V383M225.5 377V384M233.5 380V387M241.5 384V392M249.5 388V397M265.5 387V393M273.5 390V401M270.0 391.5H276.0M281.5 393V400M297.5 375V386M313.5 380V386M321.5 388V396M409.5 330V339M417.5 335V344M433.5 338V341M441.5 340V344M457.5 338V341M465.5 338V341M473.5 339V343M489.5 332V339M505.5 334V342M521.5 334V340M537.5 345V354M553.5 346V354M561.5 355V359M569.5 352V362M585.5 351V360M593.5 359V377M601.5 363V378M625.5 369V383M633.5 376V400M649.5 385V391M646.0 388.5H652.0M665.5 384V390M662.0 388.5H668.0M673.5 387V391M681.5 388V393M689.5 387V397M697.5 397V412M705.5 402V414M721.5 399V415M729.5 415V430M745.5 422V434M769.5 411V418M785.5 405V413M782.0 411.5H788.0M793.5 412V422M809.5 403V409M817.5 404V408M841.5 384V395M849.5 394V401M857.5 400V421M865.5 418V424M881.5 392V406M897.5 399V412M905.5 410V418M921.5 413V420M929.5 413V422M926.0 415.5H932.0M937.5 413V421M934.0 416.5H940.0M945.5 416V421M953.5 413V424M961.5 422V430M958.0 426.5H964.0M969.5 424V427M985.5 424V434M993.5 428V432M1001.5 427V430M1009.5 423V430M1006.0 427.5H1012.0M1033.5 422V424M1049.5 420V422M1073.5 418V421M1097.5 410V417M1105.5 414V420M1102.0 416.5H1108.0M1129.5 409V415M1126.0 411.5H1132.0M1153.5 387V394M1177.5 380V388M1201.5 378V390M1241.5 370V378M1257.5 367V380M1281.5 353V359M1278.0 357.5H1284.0M1297.5 341V353M1305.5 348V358M1302.0 352.5H1308.0M1313.5 345V359M1329.5 360V364M1345.5 355V357M1361.5 352V356M1369.5 356V362M1409.5 340V347M1417.5 342V348M1414.0 346.5H1420.0M1449.5 329V347M1465.5 344V347M1481.5 341V348M1513.5 334V345M1521.5 343V357M1529.5 346V360M1553.5 397V408M1550.0 404.5H1556.0" stroke="#50ffb4" stroke-width="1" fill="none" shape-rendering="crispEdges"/>
<path d="M86.0 207h6V209h-6ZM94.0 208h6V210h-6ZM102.0 211h6V215h-6ZM134.0 188h6V206h-6ZM150.0 395h6V401h-6ZM190.0 369h6V376h-6ZM206.0 374h6V381h-6ZM214.0 366h6V377h-6ZM222.0 377h6V382h-6ZM230.0 380h6V387h-6ZM238.0 387h6V392h-6ZM246.0 391h6V397h-6ZM262.0 388h6V390h-6ZM278.0 395h6V397h-6ZM294.0 378h6V386h-6ZM310.0 384h6V386h-6ZM318.0 388h6V396h-6ZM406.0 330h6V335h-6ZM414.0 335h6V339h-6ZM430.0 338h6V341h-6ZM438.0 340h6V344h-6ZM454.0 338h6V341h-6ZM462.0 338h6V341h-6ZM470.0 339h6V343h-6ZM486.0 336h6V339h-6ZM502.0 334h6V342h-6ZM518.0 334h6V340h-6ZM534.0 345h6V354h-6ZM550.0 346h6V354h-6ZM558.0 355h6V359h-6ZM566.0 356h6V358h-6ZM582.0 355h6V360h-6ZM590.0 359h6V362h-6ZM598.0 363h6V376h-6ZM622.0 372h6V383h-6ZM630.0 383h6V394h-6ZM670.0 387h6V391h-6ZM678.0 390h6V392h-6ZM686.0 390h6V397h-6ZM694.0 397h6V404h-6ZM702.0 404h6V408h-6ZM718.0 404h6V415h-6ZM726.0 415h6V430h-6ZM742.0 427h6V434h-6ZM766.0 411h6V416h-6ZM790.0 412h6V422h-6ZM806.0 403h6V407h-6ZM814.0 404h6V408h-6ZM838.0 389h6V395h-6ZM846.0 394h6V401h-6ZM854.0 400h6V418h-6ZM862.0 418h6V422h-6ZM878.0 398h6V406h-6ZM894.0 406h6V412h-6ZM902.0 410h6V415h-6ZM918.0 413h6V420h-6ZM942.0 416h6V421h-6ZM950.0 418h6V424h-6ZM966.0 424h6V427h-6ZM982.0 424h6V429h-6ZM990.0 428h6V432h-6ZM998.0 427h6V430h-6ZM1030.0 422h6V424h-6ZM1046.0 420h6V422h-6ZM1070.0 418h6V421h-6ZM1094.0 414h6V417h-6ZM1150.0 387h6V394h-6ZM1174.0 380h6V388h-6ZM1198.0 378h6V390h-6ZM1238.0 373h6V378h-6ZM1254.0 375h6V380h-6ZM1294.0 350h6V353h-6ZM1310.0 352h6V359h-6ZM1326.0 360h6V364h-6ZM1342.0 355h6V357h-6ZM1358.0 352h6V356h-6ZM1366.0 356h6V362h-6ZM1406.0 340h6V347h-6ZM1446.0 333h6V345h-6ZM1462.0 344h6V347h-6ZM1478.0 341h6V348h-6ZM1510.0 334h6V342h-6ZM1518.0 343h6V346h-6ZM1526.0 346h6V358h-6Z" fill="#50ffb4" shape-rendering="crispEdges"/>
<path d="M113.5 213V214M113.5 216V219M121.5 212V212M121.5 214V217M129.5 212V214M161.5 388V393M201.5 376V384M257.5 397V399M305.5 383V385M305.5 388V390M337.5 379V382M337.5 388V390M345.5 373V376M353.5 369V371M353.5 376V380M361.5 354V362M361.5 371V373M385.5 333V350M393.5 335V338M401.5 323V332M425.5 335V337M425.5 338V343M422.0 338.5H428.0M449.5 331V340M497.5 332V335M513.5 340V348M529.5 339V341M529.5 342V343M526.0 341.5H532.0M577.5 350V357M577.5 359V361M609.5 370V377M609.5 379V380M617.5 367V373M617.5 375V378M641.5 385V388M641.5 397V399M657.5 379V387M657.5 387V393M654.0 387.5H660.0M713.5 399V401M737.5 432V437M777.5 408V412M777.5 414V415M801.5 417V422M913.5 394V409M1017.5 429V432M1041.5 426V428M1089.5 408V410M1137.5 392V397M1145.5 384V390M1161.5 393V401M1169.5 379V381M1169.5 385V387M1185.5 379V382M1193.5 374V377M1209.5 392V395M1217.5 374V382M1225.5 368V374M1225.5 376V378M1249.5 380V385M1273.5 350V355M1321.5 358V362M1321.5 362V367M1318.0 362.5H1324.0M1337.5 360V365M1377.5 362V365M1393.5 345V347M1393.5 348V352M1390.0 348.5H1396.0M1425.5 343V345M1425.5 347V351M1433.5 339V341M1433.5 344V346M1489.5 340V344M1497.5 334V336M1505.5 332V335M1505.5 335V338M1502.0 335.5H1508.0M1545.5 395V401" stroke="#ff8030" stroke-width="1" fill="none" shape-rendering="crispEdges"/>
<path d="M110.5 214.5h5V215.5h-5ZM118.5 212.5h5V213.5h-5ZM126.5 204.5h5V211.5h-5ZM142.5 154.5h5V206.5h-5ZM158.5 393.5h5V400.5h-5ZM174.5 370.5h5V391.5h-5ZM198.5 374.5h5V375.5h-5ZM254.5 389.5h5V396.5h-5ZM286.5 378.5h5V396.5h-5ZM302.5 385.5h5V387.5h-5ZM326.5 389.5h5V396.5h-5ZM334.5 382.5h5V387.5h-5ZM342.5 376.5h5V383.5h-5ZM350.5 371.5h5V375.5h-5ZM358.5 362.5h5V370.5h-5ZM366.5 354.5h5V358.5h-5ZM374.5 352.5h5V353.5h-5ZM382.5 350.5h5V351.5h-5ZM390.5 338.5h5V344.5h-5ZM398.5 332.5h5V337.5h-5ZM446.5 340.5h5V342.5h-5ZM478.5 335.5h5V341.5h-5ZM494.5 335.5h5V338.5h-5ZM510.5 335.5h5V339.5h-5ZM542.5 346.5h5V353.5h-5ZM574.5 357.5h5V358.5h-5ZM606.5 377.5h5V378.5h-5ZM614.5 373.5h5V374.5h-5ZM638.5 388.5h5V396.5h-5ZM710.5 401.5h5V408.5h-5ZM734.5 426.5h5V431.5h-5ZM750.5 422.5h5V434.5h-5ZM758.5 410.5h5V420.5h-5ZM774.5 412.5h5V413.5h-5ZM798.5 404.5h5V416.5h-5ZM822.5 395.5h5V403.5h-5ZM830.5 390.5h5V393.5h-5ZM870.5 400.5h5V421.5h-5ZM886.5 402.5h5V403.5h-5ZM910.5 409.5h5V413.5h-5ZM974.5 426.5h5V428.5h-5ZM1014.5 427.5h5V428.5h-5ZM1022.5 425.5h5V426.5h-5ZM1038.5 423.5h5V425.5h-5ZM1054.5 417.5h5V420.5h-5ZM1062.5 418.5h5V420.5h-5ZM1078.5 415.5h5V417.5h-5ZM1086.5 410.5h5V414.5h-5ZM1110.5 417.5h5V419.5h-5ZM1118.5 410.5h5V422.5h-5ZM1134.5 397.5h5V409.5h-5ZM1142.5 390.5h5V394.5h-5ZM1158.5 387.5h5V392.5h-5ZM1166.5 381.5h5V384.5h-5ZM1182.5 382.5h5V386.5h-5ZM1190.5 377.5h5V380.5h-5ZM1206.5 389.5h5V391.5h-5ZM1214.5 382.5h5V389.5h-5ZM1222.5 374.5h5V375.5h-5ZM1230.5 374.5h5V376.5h-5ZM1246.5 377.5h5V379.5h-5ZM1262.5 373.5h5V380.5h-5ZM1270.5 355.5h5V372.5h-5ZM1286.5 350.5h5V355.5h-5ZM1334.5 357.5h5V359.5h-5ZM1350.5 352.5h5V355.5h-5ZM1374.5 352.5h5V361.5h-5ZM1382.5 348.5h5V351.5h-5ZM1398.5 342.5h5V347.5h-5ZM1422.5 345.5h5V346.5h-5ZM1430.5 341.5h5V343.5h-5ZM1438.5 333.5h5V341.5h-5ZM1454.5 342.5h5V344.5h-5ZM1470.5 342.5h5V345.5h-5ZM1486.5 344.5h5V346.5h-5ZM1494.5 336.5h5V342.5h-5ZM1542.5 401.5h5V423.5h-5Z" stroke="#ff8030" stroke-width="1" fill="#504800" shape-rendering="crispEdges"/>
<path d="M169.5 390V395M166.0 393.5H172.0M1537.5 404V418" stroke="#ffffc8" stroke-width="1" fill="none" shape-rendering="crispEdges"/></g>
<g stroke="#c8c8c8" stroke-width="3" fill="none" stroke-linejoin="miter"><path d="M77 322.5 H1672"/><path d="M77 448 L640 439.5 L1200 430.5 L1545 424.5 L1672 422.5"/><path d="M77 350.3 L477 344.7 L877 337.5 L1277 331.8 L1449 329.5 L1672 323.8"/><path d="M405 322.5 L736 437.5 L841.5 383 L995 433.5 L1449.5 329.5 L1545 424"/></g>
<g stroke="#9898d0" stroke-width="3" fill="none" stroke-linejoin="miter" clip-path="url(#bandclip)"><path d="M77 322.5 H1672"/><path d="M77 448 L640 439.5 L1200 430.5 L1545 424.5 L1672 422.5"/><path d="M77 350.3 L477 344.7 L877 337.5 L1277 331.8 L1449 329.5 L1672 323.8"/><path d="M405 322.5 L736 437.5 L841.5 383 L995 433.5 L1449.5 329.5 L1545 424"/></g>
<g fill="none" stroke="#00e800" stroke-width="1"><circle cx="97.5" cy="199.5" r="2.4"/><circle cx="105.5" cy="200.3" r="2.4"/><circle cx="113.5" cy="200.3" r="2.4"/><circle cx="121.5" cy="201.2" r="2.4"/><circle cx="129.5" cy="201.5" r="2.4"/><circle cx="161.5" cy="154.3" r="2.4"/><circle cx="169.5" cy="159.3" r="2.4"/><circle cx="177.5" cy="164.3" r="2.4"/><circle cx="185.5" cy="169.3" r="2.4"/><circle cx="193.5" cy="173.4" r="2.4"/><circle cx="201.5" cy="178.4" r="2.4"/><circle cx="209.5" cy="183.4" r="2.4"/><circle cx="217.5" cy="187.3" r="2.4"/><circle cx="225.5" cy="192.3" r="2.4"/><circle cx="233.5" cy="196.2" r="2.4"/><circle cx="241.5" cy="200.3" r="2.4"/><circle cx="249.5" cy="204.4" r="2.4"/><circle cx="257.5" cy="212.4" r="2.4"/><circle cx="265.5" cy="223.5" r="2.4"/><circle cx="273.5" cy="233.4" r="2.4"/><circle cx="281.5" cy="247.5" r="2.4"/><circle cx="289.5" cy="259.6" r="2.4"/><circle cx="297.5" cy="270.5" r="2.4"/><circle cx="305.5" cy="281.4" r="2.4"/><circle cx="313.5" cy="290.3" r="2.4"/><circle cx="321.5" cy="299.5" r="2.4"/><circle cx="329.5" cy="307.5" r="2.4"/><circle cx="337.5" cy="314.3" r="2.4"/><circle cx="345.5" cy="321.8" r="2.4"/><circle cx="353.5" cy="327.5" r="2.4"/><circle cx="361.5" cy="333.4" r="2.4"/><circle cx="369.5" cy="338.4" r="2.4"/><circle cx="377.5" cy="343.4" r="2.4"/><circle cx="385.5" cy="346.8" r="2.4"/><circle cx="569.5" cy="331.8" r="2.4"/><circle cx="577.5" cy="332.4" r="2.4"/><circle cx="585.5" cy="333.4" r="2.4"/><circle cx="593.5" cy="334.3" r="2.4"/><circle cx="601.5" cy="336.4" r="2.4"/><circle cx="609.5" cy="340.1" r="2.4"/><circle cx="617.5" cy="344.7" r="2.4"/><circle cx="625.5" cy="347.0" r="2.4"/><circle cx="633.5" cy="351.2" r="2.4"/><circle cx="641.5" cy="358.3" r="2.4"/><circle cx="649.5" cy="364.2" r="2.4"/><circle cx="657.5" cy="369.4" r="2.4"/><circle cx="665.5" cy="373.6" r="2.4"/><circle cx="673.5" cy="377.3" r="2.4"/><circle cx="681.5" cy="380.2" r="2.4"/><circle cx="689.5" cy="382.3" r="2.4"/><circle cx="697.5" cy="385.5" r="2.4"/><circle cx="705.5" cy="387.1" r="2.4"/><circle cx="713.5" cy="392.3" r="2.4"/><circle cx="721.5" cy="396.5" r="2.4"/><circle cx="729.5" cy="399.2" r="2.4"/><circle cx="737.5" cy="399.2" r="2.4"/><circle cx="745.5" cy="407.4" r="2.4"/><circle cx="753.5" cy="413.7" r="2.4"/><circle cx="761.5" cy="419.1" r="2.4"/><circle cx="865.5" cy="384.4" r="2.4"/><circle cx="873.5" cy="384.6" r="2.4"/><circle cx="881.5" cy="386.1" r="2.4"/><circle cx="889.5" cy="386.5" r="2.4"/><circle cx="897.5" cy="387.1" r="2.4"/><circle cx="905.5" cy="387.5" r="2.4"/><circle cx="913.5" cy="388.2" r="2.4"/><circle cx="921.5" cy="389.2" r="2.4"/><circle cx="929.5" cy="389.8" r="2.4"/><circle cx="937.5" cy="390.7" r="2.4"/><circle cx="945.5" cy="391.7" r="2.4"/><circle cx="953.5" cy="392.3" r="2.4"/><circle cx="961.5" cy="393.8" r="2.4"/><circle cx="969.5" cy="397.6" r="2.4"/><circle cx="977.5" cy="400.3" r="2.4"/><circle cx="985.5" cy="403.4" r="2.4"/><circle cx="993.5" cy="407.4" r="2.4"/><circle cx="1001.5" cy="410.1" r="2.4"/><circle cx="1009.5" cy="413.2" r="2.4"/><circle cx="1017.5" cy="416.4" r="2.4"/><circle cx="1025.5" cy="417.8" r="2.4"/><circle cx="1033.5" cy="420.5" r="2.4"/><circle cx="1121.5" cy="408.4" r="2.4"/><circle cx="1129.5" cy="408.4" r="2.4"/><circle cx="1137.5" cy="408.4" r="2.4"/><circle cx="1321.5" cy="341.2" r="2.4"/><circle cx="1329.5" cy="342.2" r="2.4"/><circle cx="1337.5" cy="343.3" r="2.4"/><circle cx="1345.5" cy="344.7" r="2.4"/><circle cx="1353.5" cy="344.7" r="2.4"/><circle cx="1361.5" cy="345.4" r="2.4"/><circle cx="1369.5" cy="345.4" r="2.4"/><circle cx="1377.5" cy="345.4" r="2.4"/><circle cx="1385.5" cy="345.4" r="2.4"/><circle cx="1481.5" cy="330.3" r="2.4"/><circle cx="1489.5" cy="330.3" r="2.4"/><circle cx="1497.5" cy="330.3" r="2.4"/><circle cx="1505.5" cy="330.3" r="2.4"/><circle cx="1529.5" cy="330.3" r="2.4"/><circle cx="1537.5" cy="330.3" r="2.4"/><circle cx="1545.5" cy="334.3" r="2.4"/><circle cx="1553.5" cy="339.5" r="2.4"/></g><g fill="none" stroke="#ff0000" stroke-width="1"><circle cx="81.5" cy="215.4" r="2.4"/><circle cx="89.5" cy="212.4" r="2.4"/><circle cx="137.5" cy="218.5" r="2.4"/><circle cx="145.5" cy="218.5" r="2.4"/><circle cx="153.5" cy="215.4" r="2.4"/><circle cx="393.5" cy="396.5" r="2.4"/><circle cx="401.5" cy="395.1" r="2.4"/><circle cx="409.5" cy="392.3" r="2.4"/><circle cx="417.5" cy="390.7" r="2.4"/><circle cx="425.5" cy="387.3" r="2.4"/><circle cx="433.5" cy="384.4" r="2.4"/><circle cx="441.5" cy="382.3" r="2.4"/><circle cx="449.5" cy="379.8" r="2.4"/><circle cx="457.5" cy="377.3" r="2.4"/><circle cx="465.5" cy="375.2" r="2.4"/><circle cx="473.5" cy="373.6" r="2.4"/><circle cx="481.5" cy="371.5" r="2.4"/><circle cx="489.5" cy="369.4" r="2.4"/><circle cx="497.5" cy="367.7" r="2.4"/><circle cx="505.5" cy="366.7" r="2.4"/><circle cx="513.5" cy="365.2" r="2.4"/><circle cx="521.5" cy="363.7" r="2.4"/><circle cx="529.5" cy="362.5" r="2.4"/><circle cx="537.5" cy="361.4" r="2.4"/><circle cx="545.5" cy="359.6" r="2.4"/><circle cx="553.5" cy="358.3" r="2.4"/><circle cx="561.5" cy="357.3" r="2.4"/><circle cx="769.5" cy="439.3" r="2.4"/><circle cx="777.5" cy="438.7" r="2.4"/><circle cx="785.5" cy="437.9" r="2.4"/><circle cx="793.5" cy="437.5" r="2.4"/><circle cx="801.5" cy="436.2" r="2.4"/><circle cx="809.5" cy="434.5" r="2.4"/><circle cx="817.5" cy="433.3" r="2.4"/><circle cx="825.5" cy="431.4" r="2.4"/><circle cx="833.5" cy="428.3" r="2.4"/><circle cx="841.5" cy="424.3" r="2.4"/><circle cx="849.5" cy="419.5" r="2.4"/><circle cx="857.5" cy="415.3" r="2.4"/><circle cx="1041.5" cy="434.8" r="2.4"/><circle cx="1049.5" cy="434.5" r="2.4"/><circle cx="1057.5" cy="434.1" r="2.4"/><circle cx="1065.5" cy="433.7" r="2.4"/><circle cx="1073.5" cy="432.7" r="2.4"/><circle cx="1081.5" cy="431.6" r="2.4"/><circle cx="1089.5" cy="430.4" r="2.4"/><circle cx="1097.5" cy="427.4" r="2.4"/><circle cx="1105.5" cy="425.8" r="2.4"/><circle cx="1113.5" cy="424.3" r="2.4"/><circle cx="1145.5" cy="426.4" r="2.4"/><circle cx="1153.5" cy="425.4" r="2.4"/><circle cx="1161.5" cy="424.3" r="2.4"/><circle cx="1169.5" cy="423.3" r="2.4"/><circle cx="1177.5" cy="422.2" r="2.4"/><circle cx="1185.5" cy="420.5" r="2.4"/><circle cx="1193.5" cy="417.4" r="2.4"/><circle cx="1201.5" cy="414.7" r="2.4"/><circle cx="1209.5" cy="411.6" r="2.4"/><circle cx="1217.5" cy="408.6" r="2.4"/><circle cx="1225.5" cy="404.5" r="2.4"/><circle cx="1233.5" cy="400.3" r="2.4"/><circle cx="1241.5" cy="396.5" r="2.4"/><circle cx="1249.5" cy="393.4" r="2.4"/><circle cx="1257.5" cy="390.7" r="2.4"/><circle cx="1265.5" cy="387.5" r="2.4"/><circle cx="1273.5" cy="384.6" r="2.4"/><circle cx="1281.5" cy="383.4" r="2.4"/><circle cx="1289.5" cy="377.3" r="2.4"/><circle cx="1297.5" cy="371.5" r="2.4"/><circle cx="1305.5" cy="365.6" r="2.4"/><circle cx="1313.5" cy="360.6" r="2.4"/><circle cx="1393.5" cy="367.7" r="2.4"/><circle cx="1401.5" cy="367.3" r="2.4"/><circle cx="1409.5" cy="366.2" r="2.4"/><circle cx="1417.5" cy="364.2" r="2.4"/><circle cx="1425.5" cy="362.5" r="2.4"/><circle cx="1433.5" cy="361.0" r="2.4"/><circle cx="1441.5" cy="359.3" r="2.4"/><circle cx="1449.5" cy="357.3" r="2.4"/><circle cx="1457.5" cy="354.8" r="2.4"/><circle cx="1465.5" cy="352.2" r="2.4"/><circle cx="1513.5" cy="353.3" r="2.4"/><circle cx="1521.5" cy="353.3" r="2.4"/></g>
<text x="103" y="159.5" fill="#fff" font-size="13" font-weight="bold" textLength="30" lengthAdjust="spacingAndGlyphs" font-family='"Liberation Serif", "Noto Serif CJK SC", serif'>4400</text><path d="M134 155.5H146M142.5 152.5L146 155.5L142.5 158.5" stroke="#d0d0d0" fill="none"/><text x="697" y="444" fill="#d8d8d8" font-size="13" font-weight="bold" textLength="28" lengthAdjust="spacingAndGlyphs" font-family='"Liberation Serif", "Noto Serif CJK SC", serif'>3148</text><path d="M727 440.5H736M733 438L736 440.5L733 443" stroke="#d0d0d0" fill="none"/>
<path d="M78.0 626h6V629h-6ZM86.0 626h6V629h-6ZM94.0 628h6V629h-6ZM102.0 627h6V629h-6ZM150.0 628h6V629h-6ZM166.0 628h6V629h-6ZM206.0 628h6V629h-6ZM238.0 628h6V629h-6ZM246.0 628h6V629h-6ZM262.0 628h6V629h-6ZM294.0 627h6V629h-6ZM318.0 628h6V629h-6ZM406.0 628h6V629h-6ZM438.0 628h6V629h-6ZM470.0 628h6V629h-6ZM486.0 627h6V629h-6ZM518.0 628h6V629h-6ZM558.0 628h6V629h-6ZM582.0 627h6V629h-6ZM590.0 628h6V629h-6ZM598.0 628h6V629h-6ZM622.0 624h6V629h-6ZM630.0 625h6V629h-6ZM646.0 626h6V629h-6ZM662.0 626h6V629h-6ZM670.0 626h6V629h-6ZM678.0 626h6V629h-6ZM686.0 624h6V629h-6ZM694.0 626h6V629h-6ZM702.0 624h6V629h-6ZM718.0 626h6V629h-6ZM726.0 625h6V629h-6ZM742.0 624h6V629h-6ZM766.0 624h6V629h-6ZM782.0 626h6V629h-6ZM790.0 626h6V629h-6ZM806.0 625h6V629h-6ZM814.0 625h6V629h-6ZM838.0 624h6V629h-6ZM846.0 624h6V629h-6ZM854.0 626h6V629h-6ZM862.0 626h6V629h-6ZM878.0 622h6V629h-6ZM894.0 622h6V629h-6ZM902.0 623h6V629h-6ZM918.0 626h6V629h-6ZM926.0 624h6V629h-6ZM934.0 623h6V629h-6ZM942.0 621h6V629h-6ZM950.0 621h6V629h-6ZM958.0 626h6V629h-6ZM966.0 626h6V629h-6ZM982.0 621h6V629h-6ZM990.0 624h6V629h-6ZM998.0 621h6V629h-6ZM1006.0 622h6V629h-6ZM1030.0 624h6V629h-6ZM1046.0 623h6V629h-6ZM1070.0 626h6V629h-6ZM1086.0 620h6V629h-6ZM1094.0 624h6V629h-6ZM1102.0 623h6V629h-6ZM1110.0 619h6V629h-6ZM1126.0 622h6V629h-6ZM1150.0 612h6V629h-6ZM1174.0 613h6V629h-6ZM1198.0 608h6V629h-6ZM1238.0 608h6V629h-6ZM1254.0 586h6V629h-6ZM1278.0 578h6V629h-6ZM1294.0 559h6V629h-6ZM1302.0 567h6V629h-6ZM1310.0 537h6V629h-6ZM1326.0 586h6V629h-6ZM1342.0 575h6V629h-6ZM1358.0 575h6V629h-6ZM1366.0 587h6V629h-6ZM1406.0 608h6V629h-6ZM1414.0 612h6V629h-6ZM1446.0 604h6V629h-6ZM1462.0 610h6V629h-6ZM1478.0 611h6V629h-6ZM1510.0 611h6V629h-6ZM1518.0 604h6V629h-6ZM1526.0 610h6V629h-6ZM1550.0 607h6V629h-6Z" fill="#00ffff" shape-rendering="crispEdges"/>
<path d="M126.5 628.5h5V628.5h-5ZM198.5 628.5h5V628.5h-5ZM286.5 627.5h5V628.5h-5ZM302.5 628.5h5V628.5h-5ZM326.5 628.5h5V628.5h-5ZM334.5 628.5h5V628.5h-5ZM366.5 628.5h5V628.5h-5ZM390.5 628.5h5V628.5h-5ZM422.5 628.5h5V628.5h-5ZM446.5 627.5h5V628.5h-5ZM478.5 628.5h5V628.5h-5ZM526.5 627.5h5V628.5h-5ZM542.5 628.5h5V628.5h-5ZM574.5 628.5h5V628.5h-5ZM614.5 628.5h5V628.5h-5ZM638.5 626.5h5V628.5h-5ZM654.5 626.5h5V628.5h-5ZM710.5 625.5h5V628.5h-5ZM734.5 626.5h5V628.5h-5ZM750.5 626.5h5V628.5h-5ZM758.5 626.5h5V628.5h-5ZM774.5 625.5h5V628.5h-5ZM798.5 626.5h5V628.5h-5ZM822.5 626.5h5V628.5h-5ZM830.5 626.5h5V628.5h-5ZM870.5 626.5h5V628.5h-5ZM886.5 623.5h5V628.5h-5ZM910.5 626.5h5V628.5h-5ZM974.5 621.5h5V628.5h-5ZM1014.5 621.5h5V628.5h-5ZM1022.5 623.5h5V628.5h-5ZM1038.5 621.5h5V628.5h-5ZM1054.5 621.5h5V628.5h-5ZM1062.5 624.5h5V628.5h-5ZM1078.5 622.5h5V628.5h-5ZM1118.5 622.5h5V628.5h-5ZM1134.5 611.5h5V628.5h-5ZM1142.5 613.5h5V628.5h-5ZM1158.5 611.5h5V628.5h-5ZM1166.5 613.5h5V628.5h-5ZM1182.5 614.5h5V628.5h-5ZM1190.5 609.5h5V628.5h-5ZM1206.5 613.5h5V628.5h-5ZM1214.5 599.5h5V628.5h-5ZM1222.5 595.5h5V628.5h-5ZM1230.5 596.5h5V628.5h-5ZM1246.5 595.5h5V628.5h-5ZM1262.5 579.5h5V628.5h-5ZM1270.5 543.5h5V628.5h-5ZM1286.5 569.5h5V628.5h-5ZM1318.5 576.5h5V628.5h-5ZM1334.5 568.5h5V628.5h-5ZM1350.5 574.5h5V628.5h-5ZM1374.5 574.5h5V628.5h-5ZM1382.5 606.5h5V628.5h-5ZM1390.5 608.5h5V628.5h-5ZM1398.5 602.5h5V628.5h-5ZM1422.5 609.5h5V628.5h-5ZM1430.5 614.5h5V628.5h-5ZM1438.5 606.5h5V628.5h-5ZM1454.5 615.5h5V628.5h-5ZM1470.5 610.5h5V628.5h-5ZM1486.5 610.5h5V628.5h-5ZM1494.5 610.5h5V628.5h-5ZM1502.5 615.5h5V628.5h-5ZM1534.5 602.5h5V628.5h-5ZM1542.5 599.5h5V628.5h-5Z" stroke="#ff4040" stroke-width="1" fill="none" shape-rendering="crispEdges"/>
<polyline points="78.0,627.5 120.0,628.5 400.0,628.5 700.0,627.5 800.0,626.0 900.0,625.5 1000.0,624.5 1077.0,624.7 1108.3,621.5 1130.3,621.5 1139.7,617.4 1171.0,612.7 1202.3,611.2 1218.0,608.0 1233.7,601.8 1249.3,597.7 1265.0,592.4 1277.5,581.4 1296.3,568.9 1308.9,563.2 1321.4,562.6 1337.0,566.7 1352.7,575.1 1377.8,576.7 1390.3,586.1 1402.8,595.5 1418.5,607.1 1440.4,610.2 1459.2,609.0 1484.3,610.2 1515.6,610.5 1531.3,610.2 1545.4,605.8 1553.2,604.3" stroke="#ffffff" stroke-width="1.15" fill="none"/>
<polyline points="78.0,627.0 120.0,628.0 400.0,628.6 700.0,628.0 800.0,626.5 900.0,626.0 1000.0,625.0 1077.0,625.3 1108.3,623.7 1139.7,620.6 1171.0,617.4 1202.3,612.7 1227.4,608.0 1249.3,604.9 1265.0,598.6 1277.5,590.8 1296.3,583.0 1308.9,576.7 1321.4,568.9 1343.3,566.4 1359.0,569.5 1377.8,572.0 1393.4,583.0 1409.1,587.7 1421.6,593.3 1440.4,601.8 1459.2,609.0 1484.3,609.6 1515.6,611.2 1531.3,610.2 1553.2,607.1" stroke="#ffff00" stroke-width="1.15" fill="none"/>
<path d="M81.5 684.5V685.4M89.5 684.5V688.6M97.5 684.5V690.8M105.5 684.5V692.6M113.5 684.5V694.2M121.5 684.5V694.2M129.5 684.5V692.6M137.5 684.5V692.6M153.5 684.5V727.1M161.5 684.5V751.9M169.5 684.5V763.8M177.5 684.5V762.8M185.5 684.5V757.5M193.5 684.5V751.2M201.5 684.5V743.4M209.5 684.5V735.6M217.5 684.5V727.7M225.5 684.5V719.9M233.5 684.5V712.7M241.5 684.5V707.4M249.5 684.5V702.7M257.5 684.5V697.0M265.5 684.5V690.8M273.5 684.5V686.1M537.5 684.5V687.0M545.5 684.5V687.9M553.5 684.5V690.1M561.5 684.5V691.7M569.5 684.5V691.7M577.5 684.5V691.7M585.5 684.5V691.7M593.5 684.5V692.6M601.5 684.5V694.8M609.5 684.5V694.8M617.5 684.5V693.9M625.5 684.5V696.4M633.5 684.5V698.0M641.5 684.5V697.3M649.5 684.5V695.8M657.5 684.5V693.3M665.5 684.5V691.7M673.5 684.5V690.8M681.5 684.5V690.1M689.5 684.5V689.5M697.5 684.5V690.8M705.5 684.5V690.8M713.5 684.5V689.5M721.5 684.5V690.8M729.5 684.5V693.9M737.5 684.5V694.8M745.5 684.5V695.8M753.5 684.5V692.6M761.5 684.5V686.4M953.5 684.5V686.4M961.5 684.5V687.0M969.5 684.5V687.6M977.5 684.5V687.6M985.5 684.5V687.6M993.5 684.5V687.6M1001.5 684.5V686.4M1009.5 684.5V685.7M1329.5 684.5V685.7M1337.5 684.5V685.7M1345.5 684.5V685.7M1361.5 684.5V685.7M1369.5 684.5V687.8M1377.5 684.5V687.8M1385.5 684.5V686.5M1393.5 684.5V685.7M1409.5 684.5V685.7M1417.5 684.5V685.7M1425.5 684.5V685.7M1433.5 684.5V685.7M1457.5 684.5V685.7M1465.5 684.5V688.8M1473.5 684.5V687.5M1481.5 684.5V689.6M1489.5 684.5V688.8M1497.5 684.5V687.5M1505.5 684.5V685.7M1513.5 684.5V687.0M1521.5 684.5V687.8M1529.5 684.5V691.7M1537.5 684.5V705.8M1545.5 684.5V710.5M1553.5 684.5V712.6" stroke="#00ffff" stroke-width="1" fill="none" shape-rendering="crispEdges"/>
<path d="M145.5 684.5V683.2M289.5 684.5V678.2M297.5 684.5V674.5M305.5 684.5V672.0M313.5 684.5V670.4M321.5 684.5V671.3M329.5 684.5V669.8M337.5 684.5V667.3M345.5 684.5V664.4M353.5 684.5V661.9M361.5 684.5V659.4M369.5 684.5V656.3M377.5 684.5V655.0M385.5 684.5V654.1M393.5 684.5V653.2M401.5 684.5V651.9M409.5 684.5V653.2M417.5 684.5V657.2M425.5 684.5V660.4M433.5 684.5V662.9M441.5 684.5V668.2M449.5 684.5V670.4M457.5 684.5V672.0M465.5 684.5V675.4M473.5 684.5V678.2M481.5 684.5V678.2M489.5 684.5V679.2M497.5 684.5V679.8M505.5 684.5V682.3M513.5 684.5V682.9M521.5 684.5V683.9M777.5 684.5V683.2M785.5 684.5V680.1M793.5 684.5V681.4M801.5 684.5V677.0M809.5 684.5V675.1M817.5 684.5V675.1M825.5 684.5V672.3M833.5 684.5V669.1M841.5 684.5V669.1M849.5 684.5V671.3M857.5 684.5V677.0M865.5 684.5V681.4M873.5 684.5V679.2M881.5 684.5V679.2M889.5 684.5V678.2M897.5 684.5V681.4M905.5 684.5V682.3M913.5 684.5V682.3M921.5 684.5V683.9M1041.5 684.5V682.3M1049.5 684.5V681.4M1057.5 684.5V681.4M1065.5 684.5V680.1M1073.5 684.5V680.1M1081.5 684.5V679.2M1089.5 684.5V678.2M1097.5 684.5V679.2M1105.5 684.5V680.7M1113.5 684.5V681.4M1121.5 684.5V680.1M1129.5 684.5V680.1M1137.5 684.5V676.3M1145.5 684.5V672.9M1153.5 684.5V672.9M1161.5 684.5V672.3M1169.5 684.5V671.3M1177.5 684.5V673.4M1185.5 684.5V673.4M1193.5 684.5V673.4M1201.5 684.5V677.3M1209.5 684.5V680.5M1217.5 684.5V679.2M1225.5 684.5V679.2M1233.5 684.5V679.2M1241.5 684.5V681.3M1249.5 684.5V682.3M1257.5 684.5V683.9M1265.5 684.5V683.9M1273.5 684.5V681.3M1281.5 684.5V679.2M1289.5 684.5V678.4M1297.5 684.5V678.4M1305.5 684.5V679.2M1313.5 684.5V682.6" stroke="#ff4040" stroke-width="1" fill="none" shape-rendering="crispEdges"/>
<polyline points="81.4,651.9 95.8,654.1 113.0,659.4 121.5,660.7 137.5,661.9 145.3,656.3 149.1,668.2 153.4,687.0 161.6,707.4 169.4,722.1 177.3,730.9 185.4,737.1 193.6,742.8 201.4,746.5 209.5,748.7 225.5,750.3 241.5,751.2 249.3,751.2 257.5,749.0 273.4,745.6 281.3,743.4 297.3,737.1 313.2,730.9 321.4,729.3 337.4,723.7 353.3,715.2 369.3,705.2 377.5,700.2 393.4,692.6 401.3,687.6 409.4,684.8 417.6,682.3 425.4,680.1 441.4,679.2 457.4,678.5 473.3,678.5 481.5,677.6 497.5,677.6 513.4,678.5 529.4,679.8 545.4,682.3 561.4,684.8 577.4,687.6 593.7,690.8 601.5,693.3 617.5,695.8 633.4,699.5 641.6,701.4 657.6,702.3 677.0,702.3 695.8,704.2 721.5,706.7 729.3,710.5 745.3,713.6 753.4,713.6 761.6,709.6 777.3,707.4 785.4,705.8 793.6,705.8 809.5,700.5 817.4,699.5 825.5,695.8 841.5,690.1 849.3,689.5 865.3,693.3 881.3,690.8 897.3,689.5 913.2,690.1 937.4,690.8 953.3,693.3 969.3,693.9 985.3,695.8 993.4,696.4 1009.4,695.1 1025.4,694.2 1041.4,692.6 1057.4,690.8 1073.3,689.5 1089.3,687.6 1105.6,686.4 1121.6,686.4 1129.4,684.5 1137.6,681.4 1145.4,678.2 1153.5,677.0 1161.4,672.9 1169.5,671.3 1177.0,671.3 1192.7,669.5 1208.3,670.5 1233.1,667.4 1242.3,668.2 1265.8,668.2 1273.6,666.1 1289.3,663.5 1297.1,662.5 1307.5,662.5 1318.0,664.3 1333.7,666.1 1359.8,667.4 1375.4,668.7 1396.3,668.7 1412.0,668.2 1432.9,668.7 1441.5,668.2 1457.4,670.0 1473.3,671.9 1489.3,673.9 1505.5,672.6 1521.4,673.9 1529.5,677.1 1537.3,687.5 1545.4,693.5 1553.5,696.9" stroke="#ffffff" stroke-width="1.15" fill="none"/>
<polyline points="81.4,649.4 108.3,653.2 124.0,655.7 145.3,657.2 153.4,662.6 161.6,672.9 169.4,683.2 177.3,692.6 185.4,701.1 193.6,709.6 201.4,716.8 209.5,723.0 217.4,728.4 225.5,732.4 241.5,738.7 257.5,742.8 273.4,744.3 289.4,743.4 305.4,740.9 321.4,737.1 337.4,733.1 353.3,727.7 369.3,720.8 385.3,715.2 401.3,705.8 417.6,698.0 433.5,691.7 449.5,687.0 465.5,683.9 481.5,681.4 497.5,679.8 513.4,679.2 529.4,679.5 545.4,680.4 561.4,681.7 577.4,683.9 593.7,686.4 609.6,689.2 625.6,692.0 641.6,695.5 657.6,697.3 677.0,699.5 695.8,701.7 721.5,704.2 745.3,708.0 761.6,709.6 785.4,707.4 817.4,704.2 849.3,697.0 881.3,693.3 913.2,691.1 937.4,691.1 969.3,693.3 1001.3,694.8 1025.4,694.5 1057.4,692.6 1089.3,690.1 1121.6,687.6 1145.4,683.9 1169.5,679.2 1177.0,677.9 1192.7,674.7 1208.3,672.6 1233.1,670.0 1255.3,669.5 1273.6,668.7 1289.3,666.9 1304.9,665.3 1323.2,665.3 1346.7,665.6 1370.2,666.6 1396.3,667.4 1422.4,668.2 1448.5,668.2 1473.3,670.0 1489.3,671.9 1505.5,672.6 1521.4,672.6 1529.5,673.9 1537.3,677.1 1545.4,679.9 1553.5,683.6" stroke="#ffff00" stroke-width="1.15" fill="none"/>
<path d="M81.5 845.5V855.2M89.5 845.5V855.2M97.5 845.5V855.4M105.5 845.5V856.4M113.5 845.5V857.4M121.5 845.5V857.6M129.5 845.5V857.8M137.5 845.5V858.0M145.5 845.5V858.1M153.5 845.5V858.3M161.5 845.5V857.6M169.5 845.5V856.8M177.5 845.5V856.1M185.5 845.5V855.3M193.5 845.5V855.3M201.5 845.5V855.4M209.5 845.5V855.5M217.5 845.5V855.6M225.5 845.5V855.7M233.5 845.5V855.8M241.5 845.5V855.1M249.5 845.5V854.4M257.5 845.5V853.7M265.5 845.5V853.3M273.5 845.5V852.9M281.5 845.5V852.5M289.5 845.5V852.1M297.5 845.5V852.1M305.5 845.5V852.1M313.5 845.5V852.1M321.5 845.5V851.3M329.5 845.5V850.4M337.5 845.5V849.5M345.5 845.5V848.5M353.5 845.5V847.6M361.5 845.5V846.6M417.5 845.5V847.7M425.5 845.5V847.7M433.5 845.5V847.7M441.5 845.5V847.7M449.5 845.5V847.7M457.5 845.5V847.7M465.5 845.5V847.7M473.5 845.5V847.7M481.5 845.5V847.7M489.5 845.5V847.7M497.5 845.5V847.7M505.5 845.5V847.7M513.5 845.5V847.7M521.5 845.5V848.2M529.5 845.5V848.0M537.5 845.5V847.7M545.5 845.5V847.7M553.5 845.5V847.7M561.5 845.5V847.7M569.5 845.5V847.9M577.5 845.5V848.1M585.5 845.5V848.3M593.5 845.5V848.5M601.5 845.5V848.7M609.5 845.5V848.9M617.5 845.5V848.6M625.5 845.5V848.3M633.5 845.5V848.2M641.5 845.5V848.0M649.5 845.5V847.9M657.5 845.5V847.7M665.5 845.5V847.7M673.5 845.5V847.7M681.5 845.5V847.7M689.5 845.5V847.7M697.5 845.5V847.7M705.5 845.5V847.7M713.5 845.5V847.7M721.5 845.5V848.2M729.5 845.5V850.4M737.5 845.5V848.0M745.5 845.5V849.5M857.5 845.5V846.8M865.5 845.5V848.2M897.5 845.5V847.3M905.5 845.5V846.9M913.5 845.5V846.5M921.5 845.5V848.3M929.5 845.5V847.3M937.5 845.5V846.4M953.5 845.5V848.3M961.5 845.5V847.4M969.5 845.5V848.2M985.5 845.5V846.7M1113.5 845.5V846.7M1257.5 845.5V846.5M1313.5 845.5V846.5M1329.5 845.5V852.2M1369.5 845.5V862.7M1449.5 845.5V848.3M1465.5 845.5V858.3M1473.5 845.5V849.6M1481.5 845.5V860.6M1489.5 845.5V853.0M1513.5 845.5V854.1M1521.5 845.5V858.8M1529.5 845.5V868.7M1537.5 845.5V882.8M1545.5 845.5V867.9M1553.5 845.5V870.5" stroke="#00ffff" stroke-width="1" fill="none" shape-rendering="crispEdges"/>
<path d="M761.5 845.5V844.6M785.5 845.5V844.2M801.5 845.5V841.1M809.5 845.5V842.2M817.5 845.5V843.2M825.5 845.5V840.2M833.5 845.5V838.9M841.5 845.5V841.1M873.5 845.5V844.2M889.5 845.5V844.6M1009.5 845.5V844.7M1017.5 845.5V844.2M1025.5 845.5V842.1M1033.5 845.5V843.6M1041.5 845.5V842.4M1049.5 845.5V841.1M1057.5 845.5V842.6M1065.5 845.5V841.1M1073.5 845.5V842.0M1081.5 845.5V838.9M1089.5 845.5V840.2M1097.5 845.5V842.7M1105.5 845.5V844.2M1121.5 845.5V842.7M1129.5 845.5V843.5M1137.5 845.5V833.4M1145.5 845.5V830.2M1153.5 845.5V838.9M1161.5 845.5V833.2M1169.5 845.5V827.0M1177.5 845.5V835.8M1185.5 845.5V833.4M1193.5 845.5V830.6M1209.5 845.5V843.6M1217.5 845.5V831.9M1225.5 845.5V830.6M1233.5 845.5V832.7M1241.5 845.5V843.9M1249.5 845.5V840.5M1265.5 845.5V828.7M1273.5 845.5V793.5M1281.5 845.5V806.6M1289.5 845.5V785.7M1297.5 845.5V804.7M1305.5 845.5V812.6M1321.5 845.5V844.4M1337.5 845.5V829.5M1345.5 845.5V843.9M1353.5 845.5V820.4M1377.5 845.5V838.4M1385.5 845.5V836.3M1393.5 845.5V838.4M1401.5 845.5V831.6M1409.5 845.5V841.8M1425.5 845.5V843.1M1433.5 845.5V839.7M1441.5 845.5V830.6M1505.5 845.5V844.4" stroke="#ff4040" stroke-width="1" fill="none" shape-rendering="crispEdges"/>
<polyline points="81.4,855.2 95.8,855.2 113.0,857.4 153.4,858.3 186.7,855.2 233.7,855.8 258.7,853.6 290.1,852.1 315.1,852.1 337.0,849.6 368.4,845.8 402.8,845.2 421.6,846.4 515.6,846.4 521.9,848.3 547.0,847.4 609.6,848.9 625.3,848.3 677.0,847.4 708.3,847.4 713.0,845.8 729.3,850.5 737.5,848.0 745.3,849.6 753.4,845.8 761.6,844.5 769.4,845.8 785.4,844.2 793.6,845.2 801.4,841.1 817.4,843.3 825.5,840.2 833.3,838.9 841.5,841.1 849.3,845.2 865.3,848.3 873.4,844.2 881.3,845.8 890.1,844.5 897.3,847.4 913.2,846.4 921.4,848.3 937.4,846.4 945.5,845.8 953.3,848.3 961.5,847.4 969.3,848.3 977.5,845.2 985.3,846.7 1001.3,845.2 1017.6,844.2 1025.4,842.0 1033.5,843.6 1049.5,841.1 1057.4,842.7 1065.5,841.1 1073.3,842.0 1081.5,838.9 1089.3,840.2 1097.5,842.7 1105.6,844.2 1113.4,846.7 1121.6,842.7 1129.4,843.6 1137.6,833.3 1145.4,830.1 1153.5,838.9 1161.4,833.3 1169.5,827.0 1177.5,835.8 1185.5,833.4 1193.5,830.6 1201.5,845.2 1209.5,843.6 1217.5,831.9 1225.5,830.6 1233.5,832.7 1241.5,843.9 1249.5,840.5 1257.5,846.5 1265.5,828.7 1273.5,793.5 1281.5,806.6 1289.5,785.7 1297.5,804.7 1305.5,812.6 1313.5,846.5 1321.5,844.4 1329.5,852.2 1337.5,829.5 1345.5,843.9 1353.5,820.4 1361.5,844.9 1369.5,862.7 1377.5,838.4 1385.5,836.3 1393.5,838.4 1401.5,831.6 1409.5,841.8 1417.5,845.7 1425.5,843.1 1433.5,839.7 1441.5,830.6 1449.5,848.3 1457.5,845.7 1465.5,858.3 1473.5,849.6 1481.5,860.6 1489.5,853.0 1497.5,845.7 1505.5,844.4 1513.5,854.1 1521.5,858.8 1529.5,868.7 1537.5,882.8 1545.5,867.9 1553.5,870.5" stroke="#ffffff" stroke-width="1.15" fill="none"/>
<polyline points="81.4,850.5 95.8,853.6 124.0,855.8 161.6,857.4 202.3,856.1 233.7,855.8 265.0,855.2 296.3,853.6 327.7,852.1 359.0,850.5 390.3,848.0 418.5,846.4 515.6,846.7 677.0,847.4 739.7,848.0 771.0,846.4 802.3,845.2 833.7,843.6 865.0,843.6 896.3,844.9 927.7,846.1 959.0,846.7 990.3,846.7 1021.6,845.8 1053.0,844.2 1084.3,842.0 1115.6,842.7 1131.3,842.7 1147.0,840.2 1162.6,839.5 1175.2,837.6 1177.0,837.9 1192.7,834.8 1208.3,835.3 1233.1,834.5 1249.3,836.6 1265.5,837.4 1281.4,830.1 1289.5,824.0 1297.4,820.9 1305.5,819.6 1321.4,820.9 1329.5,822.7 1337.3,820.4 1345.4,821.4 1353.5,823.5 1361.3,828.2 1369.4,836.6 1377.5,839.2 1385.4,840.5 1393.4,841.0 1401.5,839.2 1409.4,838.7 1417.5,840.5 1433.4,840.5 1449.3,839.2 1457.4,839.2 1465.5,842.3 1473.3,843.6 1481.4,846.2 1489.3,847.5 1505.5,847.5 1513.3,848.9 1521.4,851.5 1529.5,853.6 1537.3,857.5 1545.4,858.8 1553.5,860.6" stroke="#ffff00" stroke-width="1.15" fill="none"/>
<polyline points="81.5,921.3 89.5,937.6 97.5,937.6 105.5,946.4 113.5,951.7 121.5,944.2 129.5,928.2 137.5,921.3 145.5,902.5 153.5,999.7 161.5,970.8 169.5,960.5 177.5,954.2 185.5,951.1 193.5,949.8 201.5,948.9 209.5,948.0 217.5,947.0 225.5,947.0 233.5,947.0 241.5,947.0 249.5,949.2 257.5,949.2 265.5,949.2 273.5,953.6 281.5,955.8 289.5,942.6 297.5,938.6 305.5,941.4 313.5,938.6 321.5,950.5 329.5,946.4 337.5,930.1 345.5,922.3 353.5,920.4 361.5,912.6 369.5,915.7 377.5,921.3 385.5,921.3 393.5,924.5 401.5,924.5 409.5,927.0 417.5,931.4 425.5,932.3 433.5,933.6 441.5,937.6 449.5,935.7 457.5,937.6 465.5,939.5 473.5,945.8 481.5,942.6 489.5,934.5 497.5,932.3 505.5,947.3 513.5,943.9 521.5,950.2 529.5,957.4 537.5,972.4 545.5,961.4 553.5,960.5 561.5,964.6 569.5,960.5 577.5,955.8 585.5,953.6 593.5,960.5 601.5,962.7 609.5,962.7 617.5,956.4 625.5,958.3 633.5,961.4 641.5,958.3 649.5,954.9 657.5,952.7 665.5,951.7 673.5,951.7 681.5,951.7 689.5,952.7 697.5,961.4 705.5,964.6 713.5,956.4 721.5,958.9 729.5,965.5 737.5,963.6 745.5,961.1 753.5,954.2 761.5,946.4 769.5,944.5 777.5,943.3 785.5,939.5 793.5,944.5 801.5,934.5 809.5,930.1 817.5,932.3 825.5,924.5 833.5,920.4 841.5,923.8 849.5,930.7 857.5,947.0 865.5,956.4 873.5,941.7 881.5,935.4 889.5,937.6 897.5,945.8 905.5,953.9 913.5,942.3 921.5,954.2 929.5,954.2 937.5,952.3 945.5,952.3 953.5,952.3 961.5,957.4 969.5,955.2 977.5,955.2 985.5,956.4 993.5,956.4 1001.5,952.3 1009.5,948.3 1017.5,949.5 1025.5,943.3 1033.5,939.5 1041.5,937.3 1049.5,929.2 1057.5,925.4 1065.5,925.4 1073.5,927.6 1081.5,922.3 1089.5,920.4 1097.5,928.2 1105.5,934.8 1113.5,945.8 1121.5,930.1 1129.5,925.4 1137.5,910.4 1145.5,909.4 1153.5,921.3 1161.5,925.4 1169.5,923.2 1177.5,928.1 1185.5,929.4 1193.5,929.4 1201.5,934.1 1209.5,937.7 1217.5,932.0 1225.5,926.3 1233.5,927.3 1241.5,930.7 1249.5,933.8 1257.5,930.7 1265.5,931.5 1273.5,910.3 1281.5,913.2 1289.5,918.4 1297.5,924.2 1305.5,929.4 1313.5,934.6 1321.5,939.3 1329.5,939.3 1337.5,935.4 1345.5,934.1 1353.5,931.5 1361.5,934.1 1369.5,944.5 1377.5,941.4 1385.5,927.3 1393.5,926.0 1401.5,923.4 1409.5,925.5 1417.5,931.2 1425.5,932.8 1433.5,927.3 1441.5,918.4 1449.5,929.9 1457.5,933.3 1465.5,944.5 1473.5,941.4 1481.5,944.5 1489.5,941.4 1497.5,925.5 1505.5,922.3 1513.5,938.0 1521.5,953.4 1529.5,963.3 1537.5,994.7 1545.5,968.6 1553.5,959.4" stroke="#ffffff" stroke-width="1.15" fill="none"/>
</svg>
<text x="78.5" y="82" font-size="12" fill="#d0d0d0">K</text><text x="94" y="82" font-size="12" fill="#fff" textLength="56.0" lengthAdjust="spacingAndGlyphs">MA5:3380</text><text x="154" y="82" font-size="12" fill="#ffff00" textLength="63.0" lengthAdjust="spacingAndGlyphs">MA13:3496</text><text x="221" y="82" font-size="12" fill="#ff00ff" textLength="63.0" lengthAdjust="spacingAndGlyphs">MA21:3522</text><text x="288" y="82" font-size="12" fill="#00e000" textLength="63.0" lengthAdjust="spacingAndGlyphs">MA34:3518</text><text x="355" y="82" font-size="12" fill="#7070f0" textLength="63.0" lengthAdjust="spacingAndGlyphs">MA55:3468</text><text x="422" y="82" font-size="12" fill="#ff8000" textLength="63.0" lengthAdjust="spacingAndGlyphs">MA89:3378</text><text x="488.5" y="82" font-size="12" fill="#2090e0" textLength="70.0" lengthAdjust="spacingAndGlyphs">MA144:3392</text><text x="563" y="82" font-size="12" fill="#e82850" textLength="70.0" lengthAdjust="spacingAndGlyphs">MA233:3527</text><text x="641" y="82" font-size="12" fill="#d0d0d0" textLength="75.0" lengthAdjust="spacingAndGlyphs">SAR(10,2,20)</text><text x="721" y="82" font-size="12" fill="#ff0000" textLength="47.5" lengthAdjust="spacingAndGlyphs">SARUP:0</text><text x="773" y="82" font-size="12" fill="#00e000" textLength="90.5" lengthAdjust="spacingAndGlyphs">SARDOWN:3580</text><text x="872" y="82" font-size="12" fill="#d0d0d0" textLength="63.0" lengthAdjust="spacingAndGlyphs">BOLL(26,2)</text><text x="940" y="82" font-size="12" fill="#fff" textLength="52.5" lengthAdjust="spacingAndGlyphs">MID:3521</text><text x="997.5" y="82" font-size="12" fill="#ffff00" textLength="67.5" lengthAdjust="spacingAndGlyphs">UPPER:3710</text><text x="1069" y="82" font-size="12" fill="#ff00ff" textLength="73.0" lengthAdjust="spacingAndGlyphs">LOWER:3333</text><text x="1150" y="82" font-size="12" fill="#d0d0d0" textLength="61.5" lengthAdjust="spacingAndGlyphs">SSLO 3300</text>
<text x="78.5" y="535" font-size="12" fill="#d0d0d0" textLength="57.5" lengthAdjust="spacingAndGlyphs">VOL(5,10)</text><text x="141.5" y="535" font-size="12" fill="#d0d0d0" textLength="131.0" lengthAdjust="spacingAndGlyphs">VOLUME:1028552.0000</text><text x="277" y="535" font-size="12" fill="#fff" textLength="131.5" lengthAdjust="spacingAndGlyphs">MAVOL1:1140133.0000</text><text x="413" y="535" font-size="12" fill="#ffff00" textLength="124.5" lengthAdjust="spacingAndGlyphs">MAVOL2:993981.7000</text>
<text x="78.5" y="647" font-size="12" fill="#d0d0d0" textLength="84.5" lengthAdjust="spacingAndGlyphs">MACD(12,26,9)</text><text x="167.5" y="647" font-size="12" fill="#fff" textLength="77.5" lengthAdjust="spacingAndGlyphs">DIFF:-35.2931</text><text x="250" y="647" font-size="12" fill="#ffff00" textLength="65.5" lengthAdjust="spacingAndGlyphs">DEA:3.3503</text><text x="320" y="647" font-size="12" fill="#d0d0d0" textLength="86.0" lengthAdjust="spacingAndGlyphs">MACD:-77.2868</text>
<text x="78.5" y="782" font-size="12" fill="#d0d0d0" textLength="62.5" lengthAdjust="spacingAndGlyphs">SHORT(10)</text><text x="146" y="782" font-size="12" fill="#d0d0d0" textLength="85.5" lengthAdjust="spacingAndGlyphs">SHORT:-9.7487</text><text x="236" y="782" font-size="12" fill="#fff" textLength="42.5" lengthAdjust="spacingAndGlyphs">-9.7487</text><text x="283.5" y="782" font-size="12" fill="#ffff00" textLength="70.5" lengthAdjust="spacingAndGlyphs">MA1:-5.8676</text>
<text x="78.5" y="900" font-size="12" fill="#d0d0d0" textLength="42.0" lengthAdjust="spacingAndGlyphs">CCI(14)</text><text x="125.5" y="900" font-size="12" fill="#fff" textLength="56.0" lengthAdjust="spacingAndGlyphs">-140.4310</text>
<text x="1508" y="62" fill="#70b8ff" font-size="12" textLength="48" lengthAdjust="spacingAndGlyphs">商品叠加</text>
<line x1="1508" y1="64.5" x2="1556" y2="64.5" stroke="#70b8ff" stroke-width="1"/>
<text x="1576" y="62" fill="#70b8ff" font-size="12" textLength="24" lengthAdjust="spacingAndGlyphs">周期</text>
<line x1="1576" y1="64.5" x2="1600" y2="64.5" stroke="#70b8ff" stroke-width="1"/>
<rect x="1621.5" y="50.5" width="15" height="13" fill="none" stroke="#70b8ff"/>
<rect x="1638.5" y="50.5" width="15" height="13" fill="none" stroke="#70b8ff"/>
<rect x="1655.5" y="50.5" width="15" height="13" fill="none" stroke="#70b8ff"/>
<path d="M1624 57 L1628 53.5 V55.5 H1634 V58.5 H1628 V60.5 Z" fill="none" stroke="#70b8ff" stroke-width=".9"/>
<path d="M1651 57 L1647 53.5 V55.5 H1641 V58.5 H1647 V60.5 Z" fill="none" stroke="#70b8ff" stroke-width=".9"/>
<path d="M1656 57.5 H1665.5 M1665.5 51 V63" stroke="#70b8ff" fill="none"/><path d="M1667.5 53 V62" stroke="#70b8ff" stroke-dasharray="1,1"/>
<text x="1707.5" y="67.5" fill="#ffff00" font-size="17.5" font-weight="bold" textLength="156" lengthAdjust="spacingAndGlyphs" font-family='"Liberation Serif", "Noto Serif CJK SC", serif'>螺纹2005(rb2005)</text>
<rect x="1896.5" y="50.5" width="15" height="13" fill="none" stroke="#70b8ff"/><rect x="1899.5" y="53.5" width="9" height="7" fill="none" stroke="#70b8ff"/><line x1="1899" y1="54.5" x2="1909" y2="54.5" stroke="#70b8ff"/>
<line x1="1673" y1="73.5" x2="1913" y2="73.5" stroke="#c8140c" stroke-width="1"/>
<rect x="1674" y="74" width="59" height="4" fill="#ff4040"/>
<rect x="1733" y="74" width="178" height="4" fill="#00e400"/>
<line x1="1673" y1="78.5" x2="1913" y2="78.5" stroke="#c8140c" stroke-width="1"/>
<line x1="1673" y1="189.5" x2="1913" y2="189.5" stroke="#c8140c" stroke-width="1"/>
<line x1="1673" y1="300.5" x2="1913" y2="300.5" stroke="#c8140c" stroke-width="1"/>
<line x1="1673" y1="461.5" x2="1913" y2="461.5" stroke="#c8140c" stroke-width="1"/>
<text x="1678" y="94.5" fill="#ffffff" font-size="13.5" textLength="27.0" lengthAdjust="spacingAndGlyphs" font-family='"Liberation Serif", "Noto Serif CJK SC", serif'>卖五</text>
<text x="1785.5" y="94.5" fill="#ff4040" font-size="14" text-anchor="end" font-weight="bold" textLength="30.4" lengthAdjust="spacingAndGlyphs">3302</text>
<text x="1800.5" y="94.5" fill="#ffff00" font-size="14" font-weight="bold" textLength="22.8" lengthAdjust="spacingAndGlyphs">365</text>
<text x="1678" y="114.5" fill="#ffffff" font-size="13.5" textLength="27.0" lengthAdjust="spacingAndGlyphs" font-family='"Liberation Serif", "Noto Serif CJK SC", serif'>卖四</text>
<text x="1785.5" y="114.5" fill="#ff4040" font-size="14" text-anchor="end" font-weight="bold" textLength="30.4" lengthAdjust="spacingAndGlyphs">3301</text>
<text x="1800.5" y="114.5" fill="#ffff00" font-size="14" font-weight="bold" textLength="22.8" lengthAdjust="spacingAndGlyphs">441</text>
<text x="1678" y="134.5" fill="#ffffff" font-size="13.5" textLength="27.0" lengthAdjust="spacingAndGlyphs" font-family='"Liberation Serif", "Noto Serif CJK SC", serif'>卖三</text>
<text x="1785.5" y="134.5" fill="#ff4040" font-size="14" text-anchor="end" font-weight="bold" textLength="30.4" lengthAdjust="spacingAndGlyphs">3300</text>
<text x="1800.5" y="134.5" fill="#ffff00" font-size="14" font-weight="bold" textLength="30.4" lengthAdjust="spacingAndGlyphs">1805</text>
<text x="1678" y="154.5" fill="#ffffff" font-size="13.5" textLength="27.0" lengthAdjust="spacingAndGlyphs" font-family='"Liberation Serif", "Noto Serif CJK SC", serif'>卖二</text>
<text x="1785.5" y="154.5" fill="#ff4040" font-size="14" text-anchor="end" font-weight="bold" textLength="30.4" lengthAdjust="spacingAndGlyphs">3299</text>
<text x="1800.5" y="154.5" fill="#ffff00" font-size="14" font-weight="bold" textLength="22.8" lengthAdjust="spacingAndGlyphs">940</text>
<text x="1678" y="179.5" fill="#ffffff" font-size="13.5" textLength="27.0" lengthAdjust="spacingAndGlyphs" font-family='"Liberation Serif", "Noto Serif CJK SC", serif'>卖一</text>
<text x="1785.5" y="181.7" fill="#ff4040" font-size="20" text-anchor="end" font-weight="bold" textLength="46.4" lengthAdjust="spacingAndGlyphs">3298</text>
<text x="1800.5" y="181.7" fill="#ffff00" font-size="20" font-weight="bold" textLength="34.8" lengthAdjust="spacingAndGlyphs">267</text>
<text x="1678" y="210.5" fill="#ffffff" font-size="13.5" textLength="27.0" lengthAdjust="spacingAndGlyphs" font-family='"Liberation Serif", "Noto Serif CJK SC", serif'>买一</text>
<text x="1785.5" y="212.7" fill="#ff4040" font-size="20" text-anchor="end" font-weight="bold" textLength="46.4" lengthAdjust="spacingAndGlyphs">3297</text>
<text x="1800.5" y="212.7" fill="#ffff00" font-size="20" font-weight="bold" textLength="11.6" lengthAdjust="spacingAndGlyphs">4</text>
<text x="1678" y="235.5" fill="#ffffff" font-size="13.5" textLength="27.0" lengthAdjust="spacingAndGlyphs" font-family='"Liberation Serif", "Noto Serif CJK SC", serif'>买二</text>
<text x="1785.5" y="235.5" fill="#ff4040" font-size="14" text-anchor="end" font-weight="bold" textLength="30.4" lengthAdjust="spacingAndGlyphs">3296</text>
<text x="1800.5" y="235.5" fill="#ffff00" font-size="14" font-weight="bold" textLength="22.8" lengthAdjust="spacingAndGlyphs">192</text>
<text x="1678" y="255.5" fill="#ffffff" font-size="13.5" textLength="27.0" lengthAdjust="spacingAndGlyphs" font-family='"Liberation Serif", "Noto Serif CJK SC", serif'>买三</text>
<text x="1785.5" y="255.5" fill="#ff4040" font-size="14" text-anchor="end" font-weight="bold" textLength="30.4" lengthAdjust="spacingAndGlyphs">3295</text>
<text x="1800.5" y="255.5" fill="#ffff00" font-size="14" font-weight="bold" textLength="22.8" lengthAdjust="spacingAndGlyphs">630</text>
<text x="1678" y="275.5" fill="#ffffff" font-size="13.5" textLength="27.0" lengthAdjust="spacingAndGlyphs" font-family='"Liberation Serif", "Noto Serif CJK SC", serif'>买四</text>
<text x="1785.5" y="275.5" fill="#ff4040" font-size="14" text-anchor="end" font-weight="bold" textLength="30.4" lengthAdjust="spacingAndGlyphs">3294</text>
<text x="1800.5" y="275.5" fill="#ffff00" font-size="14" font-weight="bold" textLength="22.8" lengthAdjust="spacingAndGlyphs">131</text>
<text x="1678" y="295.5" fill="#ffffff" font-size="13.5" textLength="27.0" lengthAdjust="spacingAndGlyphs" font-family='"Liberation Serif", "Noto Serif CJK SC", serif'>买五</text>
<text x="1785.5" y="295.5" fill="#ff4040" font-size="14" text-anchor="end" font-weight="bold" textLength="30.4" lengthAdjust="spacingAndGlyphs">3293</text>
<text x="1800.5" y="295.5" fill="#ffff00" font-size="14" font-weight="bold" textLength="22.8" lengthAdjust="spacingAndGlyphs">314</text>
<text x="1678" y="316" fill="#ffffff" font-size="13.5" textLength="27.0" lengthAdjust="spacingAndGlyphs" font-family='"Liberation Serif", "Noto Serif CJK SC", serif'>最新</text>
<text x="1785.5" y="316" fill="#ff4040" font-size="14" text-anchor="end" font-weight="bold" textLength="30.4" lengthAdjust="spacingAndGlyphs">3297</text>
<text x="1800" y="316" fill="#ffffff" font-size="13.5" textLength="27.0" lengthAdjust="spacingAndGlyphs" font-family='"Liberation Serif", "Noto Serif CJK SC", serif'>结算</text>
<text x="1906.5" y="316" fill="#ff4040" font-size="14" text-anchor="end" font-weight="bold" textLength="30.4" lengthAdjust="spacingAndGlyphs">3300</text>
<text x="1678" y="336" fill="#ffffff" font-size="13.5" textLength="27.0" lengthAdjust="spacingAndGlyphs" font-family='"Liberation Serif", "Noto Serif CJK SC", serif'>涨跌</text>
<text x="1785.5" y="336" fill="#ff4040" font-size="14" text-anchor="end" font-weight="bold" textLength="15.2" lengthAdjust="spacingAndGlyphs">12</text>
<text x="1800" y="336" fill="#ffffff" font-size="13.5" textLength="27.0" lengthAdjust="spacingAndGlyphs" font-family='"Liberation Serif", "Noto Serif CJK SC", serif'>昨结</text>
<text x="1906.5" y="336" fill="#ffffff" font-size="14" text-anchor="end" font-weight="bold" textLength="30.4" lengthAdjust="spacingAndGlyphs">3285</text>
<text x="1678" y="356" fill="#ffffff" font-size="13.5" textLength="27.0" lengthAdjust="spacingAndGlyphs" font-family='"Liberation Serif", "Noto Serif CJK SC", serif'>幅度</text>
<text x="1785.5" y="356" fill="#ff4040" font-size="14" text-anchor="end" font-weight="bold" textLength="37.1" lengthAdjust="spacingAndGlyphs">0.37%</text>
<text x="1800" y="356" fill="#ffffff" font-size="13.5" textLength="27.0" lengthAdjust="spacingAndGlyphs" font-family='"Liberation Serif", "Noto Serif CJK SC", serif'>开盘</text>
<text x="1906.5" y="356" fill="#ff4040" font-size="14" text-anchor="end" font-weight="bold" textLength="30.4" lengthAdjust="spacingAndGlyphs">3298</text>
<text x="1678" y="376" fill="#ffffff" font-size="13.5" textLength="27.0" lengthAdjust="spacingAndGlyphs" font-family='"Liberation Serif", "Noto Serif CJK SC", serif'>总手</text>
<text x="1785.5" y="376" fill="#ffff00" font-size="14" text-anchor="end" font-weight="bold" textLength="53.2" lengthAdjust="spacingAndGlyphs">1028552</text>
<text x="1800" y="376" fill="#ffffff" font-size="13.5" textLength="27.0" lengthAdjust="spacingAndGlyphs" font-family='"Liberation Serif", "Noto Serif CJK SC", serif'>最高</text>
<text x="1906.5" y="376" fill="#ff4040" font-size="14" text-anchor="end" font-weight="bold" textLength="30.4" lengthAdjust="spacingAndGlyphs">3324</text>
<text x="1678" y="396" fill="#ffffff" font-size="13.5" textLength="27.0" lengthAdjust="spacingAndGlyphs" font-family='"Liberation Serif", "Noto Serif CJK SC", serif'>现手</text>
<text x="1785.5" y="396" fill="#ffff00" font-size="14" text-anchor="end" font-weight="bold" textLength="22.8" lengthAdjust="spacingAndGlyphs">181</text>
<text x="1800" y="396" fill="#ffffff" font-size="13.5" textLength="27.0" lengthAdjust="spacingAndGlyphs" font-family='"Liberation Serif", "Noto Serif CJK SC", serif'>最低</text>
<text x="1906.5" y="396" fill="#00e400" font-size="14" text-anchor="end" font-weight="bold" textLength="30.4" lengthAdjust="spacingAndGlyphs">3282</text>
<text x="1678" y="416" fill="#ffffff" font-size="13.5" textLength="27.0" lengthAdjust="spacingAndGlyphs" font-family='"Liberation Serif", "Noto Serif CJK SC", serif'>涨停</text>
<text x="1785.5" y="416" fill="#ff4040" font-size="14" text-anchor="end" font-weight="bold" textLength="30.4" lengthAdjust="spacingAndGlyphs">3482</text>
<text x="1800" y="416" fill="#ffffff" font-size="13.5" textLength="27.0" lengthAdjust="spacingAndGlyphs" font-family='"Liberation Serif", "Noto Serif CJK SC", serif'>跌停</text>
<text x="1906.5" y="416" fill="#00e400" font-size="14" text-anchor="end" font-weight="bold" textLength="30.4" lengthAdjust="spacingAndGlyphs">3087</text>
<text x="1678" y="436" fill="#ffffff" font-size="13.5" textLength="27.0" lengthAdjust="spacingAndGlyphs" font-family='"Liberation Serif", "Noto Serif CJK SC", serif'>持仓</text>
<text x="1785.5" y="436" fill="#ffff00" font-size="14" text-anchor="end" font-weight="bold" textLength="53.2" lengthAdjust="spacingAndGlyphs">1312971</text>
<text x="1800" y="436" fill="#ffffff" font-size="13.5" textLength="27.0" lengthAdjust="spacingAndGlyphs" font-family='"Liberation Serif", "Noto Serif CJK SC", serif'>仓差</text>
<text x="1906.5" y="436" fill="#ffff00" font-size="14" text-anchor="end" font-weight="bold" textLength="38.0" lengthAdjust="spacingAndGlyphs">69291</text>
<text x="1678" y="456" fill="#ffffff" font-size="13.5" textLength="27.0" lengthAdjust="spacingAndGlyphs" font-family='"Liberation Serif", "Noto Serif CJK SC", serif'>外盘</text>
<text x="1785.5" y="456" fill="#ff4040" font-size="14" text-anchor="end" font-weight="bold" textLength="45.6" lengthAdjust="spacingAndGlyphs">527581</text>
<text x="1800" y="456" fill="#ffffff" font-size="13.5" textLength="27.0" lengthAdjust="spacingAndGlyphs" font-family='"Liberation Serif", "Noto Serif CJK SC", serif'>内盘</text>
<text x="1906.5" y="456" fill="#00e400" font-size="14" text-anchor="end" font-weight="bold" textLength="45.6" lengthAdjust="spacingAndGlyphs">500971</text>
<text x="1678" y="478.5" fill="#808080" font-size="13.5" textLength="27.0" lengthAdjust="spacingAndGlyphs" font-family='"Liberation Serif", "Noto Serif CJK SC", serif'>北京</text>
<text x="1750.5" y="478.5" fill="#808080" font-size="13.5" textLength="27.0" lengthAdjust="spacingAndGlyphs" font-family='"Liberation Serif", "Noto Serif CJK SC", serif'>价格</text>
<text x="1784" y="478.5" fill="#808080" font-size="13.5" textLength="40" lengthAdjust="spacingAndGlyphs" font-family='"Liberation Serif", "Noto Serif CJK SC", serif'>√大单</text>
<text x="1846.5" y="478.5" fill="#808080" font-size="13.5" textLength="27.0" lengthAdjust="spacingAndGlyphs" font-family='"Liberation Serif", "Noto Serif CJK SC", serif'>仓差</text>
<text x="1882" y="478.5" fill="#808080" font-size="13.5" textLength="27.0" lengthAdjust="spacingAndGlyphs" font-family='"Liberation Serif", "Noto Serif CJK SC", serif'>性质</text>
<text x="1678" y="500.3" fill="#ffffff" font-size="14" font-weight="bold" textLength="34.6" lengthAdjust="spacingAndGlyphs">08:59</text>
<text x="1777.5" y="500.3" fill="#ff4040" font-size="14" text-anchor="end" font-weight="bold" textLength="30.4" lengthAdjust="spacingAndGlyphs">3298</text>
<text x="1825" y="500.3" fill="#ffffff" font-size="14" text-anchor="end" font-weight="bold" textLength="30.4" lengthAdjust="spacingAndGlyphs">3632</text>
<text x="1873.5" y="500.3" fill="#ffff00" font-size="14" text-anchor="end" font-weight="bold" textLength="30.4" lengthAdjust="spacingAndGlyphs">+855</text>
<text x="1882" y="500.3" fill="#ffffff" font-size="13.5" textLength="27.0" lengthAdjust="spacingAndGlyphs" font-family='"Liberation Serif", "Noto Serif CJK SC", serif'>空开</text>
<text x="1678" y="522.3" fill="#ffffff" font-size="14" font-weight="bold" textLength="34.6" lengthAdjust="spacingAndGlyphs">09:00</text>
<text x="1777.5" y="522.3" fill="#ff4040" font-size="14" text-anchor="end" font-weight="bold" textLength="30.4" lengthAdjust="spacingAndGlyphs">3300</text>
<text x="1825" y="522.3" fill="#ff4040" font-size="14" text-anchor="end" font-weight="bold" textLength="30.4" lengthAdjust="spacingAndGlyphs">1483</text>
<text x="1873.5" y="522.3" fill="#ffff00" font-size="14" text-anchor="end" font-weight="bold" textLength="27.8" lengthAdjust="spacingAndGlyphs">-184</text>
<text x="1882" y="522.3" fill="#ff4040" font-size="13.5" textLength="27.0" lengthAdjust="spacingAndGlyphs" font-family='"Liberation Serif", "Noto Serif CJK SC", serif'>空平</text>
<text x="1711" y="543.3" fill="#ffffff" font-size="11" text-anchor="end">:01</text>
<text x="1777.5" y="544.3" fill="#ff4040" font-size="14" text-anchor="end" font-weight="bold" textLength="30.4" lengthAdjust="spacingAndGlyphs">3298</text>
<text x="1825" y="544.3" fill="#00e400" font-size="14" text-anchor="end" font-weight="bold" textLength="30.4" lengthAdjust="spacingAndGlyphs">1578</text>
<text x="1873.5" y="544.3" fill="#ffff00" font-size="14" text-anchor="end" font-weight="bold" textLength="15.2" lengthAdjust="spacingAndGlyphs">+4</text>
<text x="1882" y="544.3" fill="#00e400" font-size="13.5" textLength="27.0" lengthAdjust="spacingAndGlyphs" font-family='"Liberation Serif", "Noto Serif CJK SC", serif'>空开</text>
<text x="1678" y="566.3" fill="#ffffff" font-size="14" font-weight="bold" textLength="34.6" lengthAdjust="spacingAndGlyphs">09:01</text>
<text x="1777.5" y="566.3" fill="#ff4040" font-size="14" text-anchor="end" font-weight="bold" textLength="30.4" lengthAdjust="spacingAndGlyphs">3290</text>
<text x="1825" y="566.3" fill="#00e400" font-size="14" text-anchor="end" font-weight="bold" textLength="30.4" lengthAdjust="spacingAndGlyphs">1332</text>
<text x="1873.5" y="566.3" fill="#ffff00" font-size="14" text-anchor="end" font-weight="bold" textLength="30.4" lengthAdjust="spacingAndGlyphs">+535</text>
<text x="1882" y="566.3" fill="#00e400" font-size="13.5" textLength="27.0" lengthAdjust="spacingAndGlyphs" font-family='"Liberation Serif", "Noto Serif CJK SC", serif'>空开</text>
<text x="1678" y="588.3" fill="#ffffff" font-size="14" font-weight="bold" textLength="34.6" lengthAdjust="spacingAndGlyphs">09:07</text>
<text x="1777.5" y="588.3" fill="#ff4040" font-size="14" text-anchor="end" font-weight="bold" textLength="30.4" lengthAdjust="spacingAndGlyphs">3312</text>
<text x="1825" y="588.3" fill="#ff4040" font-size="14" text-anchor="end" font-weight="bold" textLength="30.4" lengthAdjust="spacingAndGlyphs">1012</text>
<text x="1873.5" y="588.3" fill="#ffff00" font-size="14" text-anchor="end" font-weight="bold" textLength="27.8" lengthAdjust="spacingAndGlyphs">-663</text>
<text x="1882" y="588.3" fill="#ff4040" font-size="13.5" textLength="27.0" lengthAdjust="spacingAndGlyphs" font-family='"Liberation Serif", "Noto Serif CJK SC", serif'>空平</text>
<text x="1678" y="610.3" fill="#ffffff" font-size="14" font-weight="bold" textLength="34.6" lengthAdjust="spacingAndGlyphs">09:12</text>
<text x="1777.5" y="610.3" fill="#ff4040" font-size="14" text-anchor="end" font-weight="bold" textLength="30.4" lengthAdjust="spacingAndGlyphs">3315</text>
<text x="1825" y="610.3" fill="#ff4040" font-size="14" text-anchor="end" font-weight="bold" textLength="30.4" lengthAdjust="spacingAndGlyphs">1265</text>
<text x="1873.5" y="610.3" fill="#ffff00" font-size="14" text-anchor="end" font-weight="bold" textLength="30.4" lengthAdjust="spacingAndGlyphs">+732</text>
<text x="1882" y="610.3" fill="#ff4040" font-size="13.5" textLength="27.0" lengthAdjust="spacingAndGlyphs" font-family='"Liberation Serif", "Noto Serif CJK SC", serif'>多开</text>
<text x="1678" y="632.3" fill="#ffffff" font-size="14" font-weight="bold" textLength="34.6" lengthAdjust="spacingAndGlyphs">09:23</text>
<text x="1777.5" y="632.3" fill="#ff4040" font-size="14" text-anchor="end" font-weight="bold" textLength="30.4" lengthAdjust="spacingAndGlyphs">3300</text>
<text x="1825" y="632.3" fill="#00e400" font-size="14" text-anchor="end" font-weight="bold" textLength="30.4" lengthAdjust="spacingAndGlyphs">1151</text>
<text x="1873.5" y="632.3" fill="#ffff00" font-size="14" text-anchor="end" font-weight="bold" textLength="22.8" lengthAdjust="spacingAndGlyphs">+75</text>
<text x="1882" y="632.3" fill="#00e400" font-size="13.5" textLength="27.0" lengthAdjust="spacingAndGlyphs" font-family='"Liberation Serif", "Noto Serif CJK SC", serif'>空开</text>
<text x="1678" y="654.3" fill="#ffffff" font-size="14" font-weight="bold" textLength="34.6" lengthAdjust="spacingAndGlyphs">09:29</text>
<text x="1777.5" y="654.3" fill="#ff4040" font-size="14" text-anchor="end" font-weight="bold" textLength="30.4" lengthAdjust="spacingAndGlyphs">3301</text>
<text x="1825" y="654.3" fill="#ff4040" font-size="14" text-anchor="end" font-weight="bold" textLength="30.4" lengthAdjust="spacingAndGlyphs">1272</text>
<text x="1873.5" y="654.3" fill="#ffff00" font-size="14" text-anchor="end" font-weight="bold" textLength="27.8" lengthAdjust="spacingAndGlyphs">-231</text>
<text x="1882" y="654.3" fill="#ff4040" font-size="13.5" textLength="27.0" lengthAdjust="spacingAndGlyphs" font-family='"Liberation Serif", "Noto Serif CJK SC", serif'>空平</text>
<text x="1678" y="676.3" fill="#ffffff" font-size="14" font-weight="bold" textLength="34.6" lengthAdjust="spacingAndGlyphs">10:03</text>
<text x="1777.5" y="676.3" fill="#ff4040" font-size="14" text-anchor="end" font-weight="bold" textLength="30.4" lengthAdjust="spacingAndGlyphs">3302</text>
<text x="1825" y="676.3" fill="#ff4040" font-size="14" text-anchor="end" font-weight="bold" textLength="30.4" lengthAdjust="spacingAndGlyphs">1001</text>
<text x="1873.5" y="676.3" fill="#ffff00" font-size="14" text-anchor="end" font-weight="bold" textLength="27.8" lengthAdjust="spacingAndGlyphs">-512</text>
<text x="1882" y="676.3" fill="#ff4040" font-size="13.5" textLength="27.0" lengthAdjust="spacingAndGlyphs" font-family='"Liberation Serif", "Noto Serif CJK SC", serif'>空平</text>
<text x="1678" y="698.3" fill="#ffffff" font-size="14" font-weight="bold" textLength="34.6" lengthAdjust="spacingAndGlyphs">10:09</text>
<text x="1777.5" y="698.3" fill="#ff4040" font-size="14" text-anchor="end" font-weight="bold" textLength="30.4" lengthAdjust="spacingAndGlyphs">3296</text>
<text x="1825" y="698.3" fill="#00e400" font-size="14" text-anchor="end" font-weight="bold" textLength="30.4" lengthAdjust="spacingAndGlyphs">1111</text>
<text x="1873.5" y="698.3" fill="#ffff00" font-size="14" text-anchor="end" font-weight="bold" textLength="27.8" lengthAdjust="spacingAndGlyphs">-587</text>
<text x="1882" y="698.3" fill="#00e400" font-size="13.5" textLength="27.0" lengthAdjust="spacingAndGlyphs" font-family='"Liberation Serif", "Noto Serif CJK SC", serif'>多平</text>
<text x="1678" y="720.3" fill="#ffffff" font-size="14" font-weight="bold" textLength="34.6" lengthAdjust="spacingAndGlyphs">10:44</text>
<text x="1777.5" y="720.3" fill="#ff4040" font-size="14" text-anchor="end" font-weight="bold" textLength="30.4" lengthAdjust="spacingAndGlyphs">3320</text>
<text x="1825" y="720.3" fill="#ff4040" font-size="14" text-anchor="end" font-weight="bold" textLength="30.4" lengthAdjust="spacingAndGlyphs">1480</text>
<text x="1873.5" y="720.3" fill="#ffff00" font-size="14" text-anchor="end" font-weight="bold" textLength="30.4" lengthAdjust="spacingAndGlyphs">+488</text>
<text x="1882" y="720.3" fill="#ff4040" font-size="13.5" textLength="27.0" lengthAdjust="spacingAndGlyphs" font-family='"Liberation Serif", "Noto Serif CJK SC", serif'>多开</text>
<text x="1678" y="742.3" fill="#ffffff" font-size="14" font-weight="bold" textLength="34.6" lengthAdjust="spacingAndGlyphs">11:06</text>
<text x="1777.5" y="742.3" fill="#ff4040" font-size="14" text-anchor="end" font-weight="bold" textLength="30.4" lengthAdjust="spacingAndGlyphs">3300</text>
<text x="1825" y="742.3" fill="#00e400" font-size="14" text-anchor="end" font-weight="bold" textLength="30.4" lengthAdjust="spacingAndGlyphs">1750</text>
<text x="1873.5" y="742.3" fill="#ffff00" font-size="14" text-anchor="end" font-weight="bold" textLength="27.8" lengthAdjust="spacingAndGlyphs">-136</text>
<text x="1882" y="742.3" fill="#00e400" font-size="13.5" textLength="27.0" lengthAdjust="spacingAndGlyphs" font-family='"Liberation Serif", "Noto Serif CJK SC", serif'>多平</text>
<text x="1678" y="764.3" fill="#ffffff" font-size="14" font-weight="bold" textLength="34.6" lengthAdjust="spacingAndGlyphs">11:12</text>
<text x="1777.5" y="764.3" fill="#ff4040" font-size="14" text-anchor="end" font-weight="bold" textLength="30.4" lengthAdjust="spacingAndGlyphs">3296</text>
<text x="1825" y="764.3" fill="#00e400" font-size="14" text-anchor="end" font-weight="bold" textLength="30.4" lengthAdjust="spacingAndGlyphs">1382</text>
<text x="1873.5" y="764.3" fill="#ffff00" font-size="14" text-anchor="end" font-weight="bold" textLength="30.4" lengthAdjust="spacingAndGlyphs">+798</text>
<text x="1882" y="764.3" fill="#00e400" font-size="13.5" textLength="27.0" lengthAdjust="spacingAndGlyphs" font-family='"Liberation Serif", "Noto Serif CJK SC", serif'>空开</text>
<text x="1711" y="785.3" fill="#ffffff" font-size="11" text-anchor="end">:13</text>
<text x="1777.5" y="786.3" fill="#ff4040" font-size="14" text-anchor="end" font-weight="bold" textLength="30.4" lengthAdjust="spacingAndGlyphs">3298</text>
<text x="1825" y="786.3" fill="#ff4040" font-size="14" text-anchor="end" font-weight="bold" textLength="30.4" lengthAdjust="spacingAndGlyphs">1044</text>
<text x="1873.5" y="786.3" fill="#ffff00" font-size="14" text-anchor="end" font-weight="bold" textLength="30.4" lengthAdjust="spacingAndGlyphs">+667</text>
<text x="1882" y="786.3" fill="#ff4040" font-size="13.5" textLength="27.0" lengthAdjust="spacingAndGlyphs" font-family='"Liberation Serif", "Noto Serif CJK SC", serif'>多开</text>
<text x="1678" y="808.3" fill="#ffffff" font-size="14" font-weight="bold" textLength="34.6" lengthAdjust="spacingAndGlyphs">13:30</text>
<text x="1777.5" y="808.3" fill="#ff4040" font-size="14" text-anchor="end" font-weight="bold" textLength="30.4" lengthAdjust="spacingAndGlyphs">3303</text>
<text x="1825" y="808.3" fill="#00e400" font-size="14" text-anchor="end" font-weight="bold" textLength="30.4" lengthAdjust="spacingAndGlyphs">1660</text>
<text x="1873.5" y="808.3" fill="#ffff00" font-size="14" text-anchor="end" font-weight="bold" textLength="30.4" lengthAdjust="spacingAndGlyphs">+380</text>
<text x="1882" y="808.3" fill="#00e400" font-size="13.5" textLength="27.0" lengthAdjust="spacingAndGlyphs" font-family='"Liberation Serif", "Noto Serif CJK SC", serif'>空开</text>
<text x="1678" y="830.3" fill="#ffffff" font-size="14" font-weight="bold" textLength="34.6" lengthAdjust="spacingAndGlyphs">13:49</text>
<text x="1777.5" y="830.3" fill="#ff4040" font-size="14" text-anchor="end" font-weight="bold" textLength="30.4" lengthAdjust="spacingAndGlyphs">3291</text>
<text x="1825" y="830.3" fill="#ff4040" font-size="14" text-anchor="end" font-weight="bold" textLength="30.4" lengthAdjust="spacingAndGlyphs">1492</text>
<text x="1873.5" y="830.3" fill="#ffff00" font-size="14" text-anchor="end" font-weight="bold" textLength="30.4" lengthAdjust="spacingAndGlyphs">+778</text>
<text x="1882" y="830.3" fill="#ff4040" font-size="13.5" textLength="27.0" lengthAdjust="spacingAndGlyphs" font-family='"Liberation Serif", "Noto Serif CJK SC", serif'>多开</text>
<text x="1678" y="852.3" fill="#ffffff" font-size="14" font-weight="bold" textLength="34.6" lengthAdjust="spacingAndGlyphs">14:15</text>
<text x="1777.5" y="852.3" fill="#ff4040" font-size="14" text-anchor="end" font-weight="bold" textLength="30.4" lengthAdjust="spacingAndGlyphs">3286</text>
<text x="1825" y="852.3" fill="#ff4040" font-size="14" text-anchor="end" font-weight="bold" textLength="30.4" lengthAdjust="spacingAndGlyphs">1098</text>
<text x="1873.5" y="852.3" fill="#ffff00" font-size="14" text-anchor="end" font-weight="bold" textLength="27.8" lengthAdjust="spacingAndGlyphs">-114</text>
<text x="1882" y="852.3" fill="#ff4040" font-size="13.5" textLength="27.0" lengthAdjust="spacingAndGlyphs" font-family='"Liberation Serif", "Noto Serif CJK SC", serif'>空平</text>
<path d="M1709.5 1014 V1004 Q1709.5 1002.5 1711 1002.5 H1913" stroke="#c8140c" fill="none"/>
<text x="1685" y="1016" fill="#ffffff" font-size="12" font-family='"Liberation Serif", "Noto Serif CJK SC", serif'>笔</text>
<rect x="1913" y="49" width="2" height="965" fill="#c8c8c8"/>
</svg>
<div id="menubar">
<span class="mi" style="left:6px;color:#000">系统</span>
<span class="mi" style="left:54px;color:#000">页面</span>
<span class="mi" style="left:102px;color:#000">分析</span>
<span class="mi" style="left:150px;color:#000">新闻</span>
<span class="mi" style="left:198px;color:#e00010">特色功能</span>
<span class="mi" style="left:270px;color:#000">鲁证期货专栏</span>
<span class="mi" style="left:366px;color:#000">交易</span>
<span class="mi" style="left:414px;color:#000">工具</span>
<span class="mi" style="left:462px;color:#000">帮助</span>
<span class="ttl">博易云-鲁证期货</span>
<span class="tb" style="left:1665px"><svg width="12" height="15" viewBox="0 0 12 15" style="position:absolute;left:10px;top:2px"><path d="M7.5 0 L1.5 8 H5.2 L3.5 15 L10.5 6 H6.5 Z" fill="#f0a020"/></svg><b style="left:30px">交易</b></span>
<span class="tb" style="left:1742px"><svg width="16" height="13" viewBox="0 0 16 13" style="position:absolute;left:9px;top:3px"><ellipse cx="8" cy="5.5" rx="7.5" ry="5.2" fill="#787878"/><path d="M4 9 L3 13 L8 10 Z" fill="#787878"/><circle cx="5" cy="5.5" r="1" fill="#ddd"/><circle cx="8" cy="5.5" r="1" fill="#ddd"/><circle cx="11" cy="5.5" r="1" fill="#ddd"/></svg><b style="left:33px">论坛</b></span>
<span style="position:absolute;left:1870px;top:2px;color:#c8c8c8;font-size:11px">x</span><i style="position:absolute;left:1833px;top:4px;width:9px;height:8px;border:1px solid #d0d0d0"></i>
</div>
<div id="toolbar"></div><div id="tbline"></div>
<svg width="0" height="0" style="position:absolute"><defs><linearGradient id="gGold" x1="0" y1="0" x2="0" y2="1"><stop offset="0" stop-color="#ecc040"/><stop offset=".5" stop-color="#dca818"/><stop offset="1" stop-color="#c08c08"/></linearGradient><linearGradient id="gGreen" x1="0" y1="0" x2="0" y2="1"><stop offset="0" stop-color="#80c470"/><stop offset="1" stop-color="#4a9c40"/></linearGradient><linearGradient id="gRed" x1="0" y1="0" x2="0" y2="1"><stop offset="0" stop-color="#ff8040"/><stop offset="1" stop-color="#f03818"/></linearGradient><linearGradient id="gArrow" x1="0" y1="0" x2="0" y2="1"><stop offset="0" stop-color="#ffe060"/><stop offset="1" stop-color="#f0a000"/></linearGradient></defs></svg>
<svg class="ic" style="left:1px;top:28px" width="16" height="16" viewBox="0 0 16 16"><path d="M0.8 8 L8 1.2 V5 H15.3 V11 H8 V14.8 Z" fill="url(#gArrow)" stroke="#c88c00" stroke-width=".8"/></svg>
<svg class="ic" style="left:29px;top:28px" width="16" height="16" viewBox="0 0 16 16"><path d="M3 7.5 V15 H13.2 V7.5 L8 3 Z" fill="#f6f6f6" stroke="#a8a8a8" stroke-width=".6"/><path d="M3 12.5 H13.2 V15 H3Z" fill="#d02020"/><path d="M0.6 8.8 L8 1 L15.4 8.8 L13.6 10 L8 4.4 L2.4 10 Z" fill="#e82020" stroke="#a01010" stroke-width=".5"/><rect x="6.6" y="9" width="3" height="6" fill="#b01818"/></svg>
<svg class="ic" style="left:57px;top:28px" width="16" height="16" viewBox="0 0 16 16"><rect x="1" y="1" width="14" height="14.5" rx="2" fill="url(#gGold)"/><path d="M3 4.5H13M3 7H13M3 9.5H13M3 12H11" stroke="#f8e090" stroke-width=".8" stroke-dasharray="2,.7"/></svg>
<svg class="ic" style="left:85px;top:28px" width="16" height="16" viewBox="0 0 16 16"><rect x=".8" y="2.5" width="14.6" height="12.8" rx="1.5" fill="url(#gRed)"/><rect x=".8" y="2.5" width="14.6" height="3" fill="#f0a020"/><text x="8" y="13" font-size="8.5" font-weight="bold" fill="#fff" text-anchor="middle" font-family='"Liberation Serif", serif'>F10</text></svg>
<svg class="ic" style="left:113px;top:28px" width="16" height="16" viewBox="0 0 16 16"><path d="M2.5 7 A5.6 5 0 0 1 12 4.2" fill="none" stroke="#48b020" stroke-width="2.6"/><path d="M10.5 1 L15 5.5 L9.5 6.8 Z" fill="#48b020"/><path d="M13.5 9 A5.6 5 0 0 1 4 11.8" fill="none" stroke="#48b020" stroke-width="2.6"/><path d="M5.5 15 L1 10.5 L6.5 9.2 Z" fill="#48b020"/></svg>
<svg class="ic" style="left:141px;top:28px" width="16" height="16" viewBox="0 0 16 16"><path d="M6.5 9 L2 13.6" stroke="#f0b000" stroke-width="3.4" stroke-linecap="round"/><circle cx="10" cy="5.5" r="4.3" fill="#fff" stroke="#e01010" stroke-width="1.7"/><path d="M7.7 5.5H12.3M10 3.2V7.8" stroke="#e01010" stroke-width="1.5"/></svg>
<svg class="ic" style="left:169px;top:28px" width="16" height="16" viewBox="0 0 16 16"><path d="M6.5 9 L2 13.6" stroke="#f0b000" stroke-width="3.4" stroke-linecap="round"/><circle cx="10" cy="5.5" r="4.3" fill="#fff" stroke="#e01010" stroke-width="1.7"/><path d="M7.7 5.5H12.3" stroke="#e01010" stroke-width="1.5"/></svg>
<svg class="ic" style="left:197px;top:28px" width="16" height="16" viewBox="0 0 16 16"><rect x=".8" y="1.5" width="10" height="9.5" rx="1" fill="#e01818" stroke="#901010" stroke-width=".6"/><rect x="5.5" y="6" width="10" height="9" rx="1.5" fill="#58b050" stroke="#3c8c38" stroke-width=".6"/></svg>
<svg class="ic" style="left:225px;top:28px" width="16" height="16" viewBox="0 0 16 16"><path d="M2.5 11 L10.5 1.2 L14.8 4.2 L7 13.2 Z" fill="#f03020"/><path d="M2.5 11 L7 13.2 L2 14 Z" fill="#303030"/><path d="M1.5 15.3 H15" stroke="#f02020" stroke-width="1"/></svg>
<svg class="ic" style="left:253px;top:28px" width="16" height="16" viewBox="0 0 16 16"><path d="M5.5 1 C8 1 10 4 14.5 10.5 C15 13 9 16 3.5 15 C1 14 3 4 5.5 1 Z" fill="#e8a020" stroke="#904000" stroke-width=".7"/><ellipse cx="9" cy="12" rx="4.5" ry="2.4" fill="#c02808" transform="rotate(-20 9 12)"/></svg>
<svg class="ic" style="left:281px;top:28px" width="16" height="16" viewBox="0 0 16 16"><path d="M1 2.8 H15 L9.2 9.2 V15 H6.8 V9.2 Z" fill="#e8e8e8" stroke="#707070" stroke-width=".9"/><path d="M3.6 4.8 H12.4 L8 8.8 Z" fill="#e01020"/><ellipse cx="8" cy="2.8" rx="7" ry="1.4" fill="#f8f8f8" stroke="#707070" stroke-width=".8"/></svg>
<span class="ic" style="left:309px;top:29px;color:#3a8cf0;font-size:13px;line-height:16px">新</span>
<svg class="ic" style="left:309px;top:28px" width="16" height="16" viewBox="0 0 16 16"><circle cx="13" cy="3.4" r="2.9" fill="#f01020"/></svg>
<i class="sep" style="left:333px"></i>
<svg class="ic" style="left:345px;top:28px" width="16" height="16" viewBox="0 0 16 16"><rect x=".8" y="1.2" width="14.4" height="14" rx="1" fill="#fff" stroke="#404040" stroke-width="1"/><rect x="1.3" y="1.7" width="13.4" height="2.6" fill="#ffd840"/><path d="M3 7H7M9 7H13" stroke="#20a020" stroke-width="1.1"/><path d="M3 10H7M9 10H13" stroke="#e02020" stroke-width="1.1"/><path d="M3 13H7M9 13H13" stroke="#202090" stroke-width="1.1"/></svg>
<svg class="ic" style="left:373px;top:28px" width="16" height="16" viewBox="0 0 16 16"><rect x="2" y="10.5" width="3" height="5" fill="#188018"/><rect x="7" y="8.5" width="3" height="7" fill="#e01828"/><rect x="12" y="6.5" width="3" height="9" fill="#f0b800"/><path d="M1 10 L5 5.5 L8 7.5 L15 1" fill="none" stroke="#f01020" stroke-width="2"/></svg>
<svg class="ic" style="left:401px;top:28px" width="16" height="16" viewBox="0 0 16 16"><rect x=".5" y=".5" width="15" height="15" rx="2.5" fill="url(#gRed)"/><text x="8" y="12" font-size="10.5" font-weight="bold" fill="#fff" text-anchor="middle" textLength="14" lengthAdjust="spacingAndGlyphs">Tick</text></svg>
<i style="position:absolute;left:423px;top:25px;width:27px;height:21px;border:1px solid #202020;border-radius:4px;background:#fff;box-sizing:border-box"></i>
<svg class="ic" style="left:429px;top:28px" width="16" height="16" viewBox="0 0 16 16"><rect x="0.5" y="0.5" width="15" height="15" rx="2.5" fill="url(#gGold)" stroke="#b88408" stroke-opacity=".6"/><text x="8" y="12.3" font-size="11.5" fill="#fff" text-anchor="middle">日</text></svg>
<svg class="ic" style="left:457px;top:28px" width="16" height="16" viewBox="0 0 16 16"><rect x="0.5" y="0.5" width="15" height="15" rx="2.5" fill="url(#gGold)" stroke="#b88408" stroke-opacity=".6"/><text x="8" y="12.3" font-size="11.5" fill="#fff" text-anchor="middle">周</text></svg>
<svg class="ic" style="left:485px;top:28px" width="16" height="16" viewBox="0 0 16 16"><rect x="0.5" y="0.5" width="15" height="15" rx="2.5" fill="url(#gGold)" stroke="#b88408" stroke-opacity=".6"/><text x="8" y="12.3" font-size="11.5" fill="#fff" text-anchor="middle">月</text></svg>
<svg class="ic" style="left:513px;top:28px" width="16" height="16" viewBox="0 0 16 16"><rect x="0.5" y="0.5" width="15" height="15" rx="2.5" fill="url(#gGold)" stroke="#b88408" stroke-opacity=".6"/><text x="8" y="12.3" font-size="11.5" fill="#fff" text-anchor="middle">季</text></svg>
<svg class="ic" style="left:541px;top:28px" width="16" height="16" viewBox="0 0 16 16"><rect x="0.5" y="0.5" width="15" height="15" rx="2.5" fill="url(#gGold)" stroke="#b88408" stroke-opacity=".6"/><text x="8" y="12.3" font-size="11" fill="#fff" text-anchor="middle">X</text></svg>
<svg class="ic" style="left:569px;top:28px" width="16" height="16" viewBox="0 0 16 16"><rect x="0.5" y="0.5" width="15" height="15" rx="2.5" fill="url(#gGreen)" stroke="#4c9440" stroke-opacity=".6"/><text x="8" y="12.3" font-size="10.5" fill="#fff" text-anchor="middle">1</text></svg>
<svg class="ic" style="left:597px;top:28px" width="16" height="16" viewBox="0 0 16 16"><rect x="0.5" y="0.5" width="15" height="15" rx="2.5" fill="url(#gGreen)" stroke="#4c9440" stroke-opacity=".6"/><text x="8" y="12.3" font-size="10.5" fill="#fff" text-anchor="middle">3</text></svg>
<svg class="ic" style="left:625px;top:28px" width="16" height="16" viewBox="0 0 16 16"><rect x="0.5" y="0.5" width="15" height="15" rx="2.5" fill="url(#gGreen)" stroke="#4c9440" stroke-opacity=".6"/><text x="8" y="12.3" font-size="10.5" fill="#fff" text-anchor="middle">5</text></svg>
<svg class="ic" style="left:653px;top:28px" width="16" height="16" viewBox="0 0 16 16"><rect x="0.5" y="0.5" width="15" height="15" rx="2.5" fill="url(#gGreen)" stroke="#4c9440" stroke-opacity=".6"/><text x="8" y="12.3" font-size="10.5" fill="#fff" text-anchor="middle">15</text></svg>
<svg class="ic" style="left:681px;top:28px" width="16" height="16" viewBox="0 0 16 16"><rect x="0.5" y="0.5" width="15" height="15" rx="2.5" fill="url(#gGreen)" stroke="#4c9440" stroke-opacity=".6"/><text x="8" y="12.3" font-size="10.5" fill="#fff" text-anchor="middle">30</text></svg>
<svg class="ic" style="left:709px;top:28px" width="16" height="16" viewBox="0 0 16 16"><rect x="0.5" y="0.5" width="15" height="15" rx="2.5" fill="url(#gGreen)" stroke="#4c9440" stroke-opacity=".6"/><text x="8" y="12.3" font-size="10.5" fill="#fff" text-anchor="middle">60</text></svg>
<svg class="ic" style="left:737px;top:28px" width="16" height="16" viewBox="0 0 16 16"><rect x="0.5" y="0.5" width="15" height="15" rx="2.5" fill="url(#gGreen)" stroke="#4c9440" stroke-opacity=".6"/><text x="8" y="12.3" font-size="10.5" fill="#fff" text-anchor="middle" textLength="12.5" lengthAdjust="spacingAndGlyphs">2hr</text></svg>
<svg class="ic" style="left:765px;top:28px" width="16" height="16" viewBox="0 0 16 16"><rect x="0.5" y="0.5" width="15" height="15" rx="2.5" fill="url(#gGreen)" stroke="#4c9440" stroke-opacity=".6"/><text x="8" y="12.3" font-size="10.5" fill="#fff" text-anchor="middle" textLength="12.5" lengthAdjust="spacingAndGlyphs">4hr</text></svg>
<svg class="ic" style="left:793px;top:28px" width="16" height="16" viewBox="0 0 16 16"><rect x="0.5" y="0.5" width="15" height="15" rx="2.5" fill="url(#gGreen)" stroke="#4c9440" stroke-opacity=".6"/><text x="8" y="12.3" font-size="10.5" fill="#fff" text-anchor="middle">Y</text></svg>
<i class="sep" style="left:817px"></i>
<svg class="ic" style="left:828.5px;top:28px" width="16" height="16" viewBox="0 0 16 16"><rect x="0.5" y="0.5" width="15" height="15" rx="2.5" fill="url(#gRed)" stroke="#d83818" stroke-opacity=".6"/><text x="8" y="12.3" font-size="11.5" fill="#fff" text-anchor="middle">画</text></svg>
<div class="wm"><svg width="34" height="28" viewBox="0 0 34 28" style="position:absolute;left:0;top:0"><rect x="0" y="0" width="34" height="28" rx="3" fill="#e8642c"/><circle cx="17" cy="14" r="10.5" fill="none" stroke="#fff" stroke-width="2.6"/><path d="M11 9.5H23M9.5 14H24.5M17 9.5V21M12.5 18.5 H21.5" stroke="#fff" stroke-width="2.4" fill="none"/></svg><span class="w1">5e</span><span class="w2">天资</span><span class="w3">5etz.com</span></div>
</body></html>
